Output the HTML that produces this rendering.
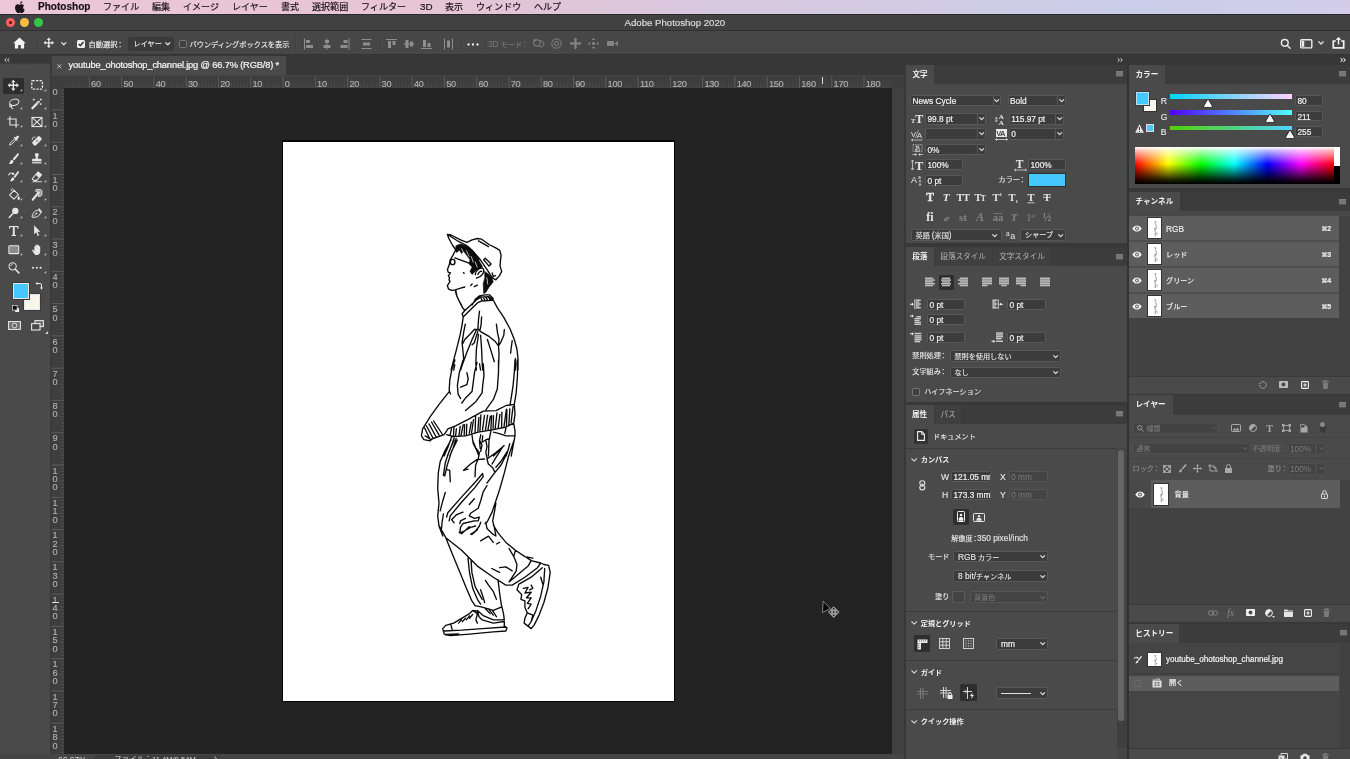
<!DOCTYPE html>
<html lang="ja">
<head>
<meta charset="utf-8">
<title>Adobe Photoshop 2020</title>
<style>
*{box-sizing:border-box;margin:0;padding:0}
html,body{width:1350px;height:759px;overflow:hidden;background:#454545}
body{position:relative;font-family:"Liberation Sans","Noto Sans CJK JP",sans-serif;font-size:8px;color:#dcdcdc;line-height:1;-webkit-font-smoothing:antialiased}
.a{position:absolute}
.t{position:absolute;white-space:nowrap;line-height:1}
svg{position:absolute;overflow:visible}
/* menu bar */
#menubar{left:0;top:0;width:1350px;height:14px;background:linear-gradient(90deg,#ecc7d6 0%,#e8c5d4 29.600%,#e0c5d8 41.500%,#d8c8df 51.900%,#d2cbe3 66.700%,#c9cde9 83.700%,#d3cdea 100%)}
#menubar .t{top:1.5px;font-size:9.05px;color:#1a1216;line-height:11px;-webkit-text-stroke-width:0.18px}
#titlebar{left:0;top:14px;width:1350px;height:17px;background:#414141;border-top:1px solid #2a2a2a;border-bottom:1px solid #303030}
#optbar{left:0;top:31px;width:1350px;height:24px;background:#474747;border-bottom:1px solid #333}
.sep{position:absolute;width:1px;background:#404040;top:35px;height:17px;box-shadow:1px 0 0 #4c4c4c}
.fld{position:absolute;background:#3b3b3b;border:1px solid #5a5a5a;border-radius:1.5px}
.fld .t{color:#e6e6e6}
/* panels */
.pbar{position:absolute;background:#3c3c3c}
.ptab{position:absolute;background:#4a4a4a;top:0;height:100%}
.ptab.in{background:#404040}
.pbody{position:absolute;background:#4a4a4a}
.pt{position:absolute;white-space:nowrap;font-size:7.6px;line-height:10px;color:#f0f0f0;font-weight:bold}
.pt.dim{color:#b4b4b4;font-weight:normal}
.lab{position:absolute;white-space:nowrap;font-size:7.15px;line-height:10px;color:#e2e2e2;-webkit-text-stroke-width:0.15px}
.val{position:absolute;white-space:nowrap;font-size:8.3px;line-height:10px;color:#f0f0f0;-webkit-text-stroke-width:0.2px}
.dimt{color:#7c7c7c !important;-webkit-text-stroke-width:0 !important}
.hd{position:absolute;white-space:nowrap;font-size:7.15px;line-height:10px;color:#f2f2f2;font-weight:bold}
.row{position:absolute;background:#5d5d5d}
.hsep{position:absolute;height:1px;background:#3c3c3c}
.rl{font-size:9.2px;color:#b0b0b0;line-height:9px;letter-spacing:-0.3px;-webkit-text-stroke:0.15px #b0b0b0}
.en{font-size:8.3px}
.co{display:inline-block;width:4.4px;text-indent:-1.1px;overflow:visible}
</style>
</head>
<body>
<div id="app" style="position:absolute;left:0;top:0;width:1350px;height:759px;will-change:transform;transform:translateZ(0)">
<!-- macOS menu bar -->
<div id="menubar" class="a">
<svg style="left:14.5px;top:0.5px" width="10" height="12" viewBox="0 0 170 200"><path fill="#1c1418" d="M150 68c-1 1-22 13-22 39 0 30 27 41 28 41-0.200 0.600-4 15-14 30-9 13-18 26-32 26s-18-8-34-8c-16 0-21 8-34 8s-22-12-33-26C-2 160-10 126-10 110c0-37 24-57 48-57 13 0 23 8 31 8 8 0 20-9 34-9 6 0 26 0.500 39 16zM105 33c6-7 10-17 10-27 0-1 0-3-0.300-4-10 0.400-21 6-28 14-5 6-11 16-11 26 0 2 0.300 3 0.400 4 0.600 0.100 2 0.200 3 0.200 9 0 20-6 26-13z" transform="translate(10,0)"/></svg>
<span class="t" style="left:38px;font-weight:bold;font-size:10.05px;top:1px">Photoshop</span>
<span class="t" style="left:103px">ファイル</span>
<span class="t" style="left:152px">編集</span>
<span class="t" style="left:183px">イメージ</span>
<span class="t" style="left:232px">レイヤー</span>
<span class="t" style="left:281px">書式</span>
<span class="t" style="left:312px">選択範囲</span>
<span class="t" style="left:361px">フィルター</span>
<span class="t" style="left:420px;font-size:9.800px;top:1.200px">3D</span>
<span class="t" style="left:445px">表示</span>
<span class="t" style="left:476px">ウィンドウ</span>
<span class="t" style="left:534px">ヘルプ</span>
</div>
<!-- window title bar -->
<div id="titlebar" class="a">
<div class="a" style="left:5.800px;top:3.400px;width:9px;height:9px;border-radius:50%;background:#fc615d"></div>
<div class="a" style="left:8.800px;top:6.400px;width:3px;height:3px;border-radius:50%;background:#5a0e0c"></div>
<div class="a" style="left:20px;top:3.400px;width:9px;height:9px;border-radius:50%;background:#fdbc40"></div>
<div class="a" style="left:34px;top:3.400px;width:9px;height:9px;border-radius:50%;background:#34c84a"></div>
<span class="t" style="left:624.500px;top:3.500px;font-size:9.650px;color:#dadada;letter-spacing:0px;top:3px;-webkit-text-stroke:0.2px #dadada" id="wtitle">Adobe Photoshop 2020</span>
</div>
<!-- options bar -->
<div id="optbar" class="a"></div>
<svg style="left:13px;top:37px" width="13" height="12" viewBox="0 0 13 12"><path fill="#f4f4f4" d="M6.500 0.400L0.300 6.200h1.600v5.400h3.300V7.900h2.600v3.700h3.300V6.200h1.600z"/></svg>
<div class="sep" style="left:37px"></div>
<svg style="left:43px;top:37.400px" width="11.600" height="11.600" viewBox="0 0 16 16"><path fill="#ededed" d="M8 0.800L10.800 4H8.900V7.100H12V5.200L15.200 8 12 10.800V8.900H8.900V12H10.800L8 15.200 5.200 12H7.100V8.900H4V10.800L0.800 8 4 5.200V7.100H7.100V4H5.200Z"/></svg>
<svg style="left:60.500px;top:42px" width="5.600" height="3.700" viewBox="0 0 6 4"><path fill="none" stroke="#e0e0e0" stroke-width="1.300" stroke-linecap="round" stroke-linejoin="round" d="M0.800 0.800L3 3l2.200-2.200"/></svg>
<div class="sep" style="left:72px"></div>
<div class="a" style="left:77px;top:40px;width:8px;height:8px;background:#f0f0f0;border-radius:1.500px"></div>
<svg style="left:77px;top:40px" width="8" height="8" viewBox="0 0 8 8"><path fill="none" stroke="#2c2c2c" stroke-width="1.400" d="M1.600 4.100l1.700 1.700L6.500 2"/></svg>
<span class="t" style="left:88.500px;top:39.500px;font-size:7.250px;color:#e6e6e6;line-height:9px;-webkit-text-stroke:0.2px #e6e6e6">自動選択<span class="co">：</span></span>
<div class="a" style="left:128px;top:37px;width:46px;height:14px;background:#3a3a3a;border-radius:2px"></div>
<span class="t" style="left:133.600px;top:39.800px;font-size:7.100px;color:#e6e6e6;line-height:9px;-webkit-text-stroke:0.2px #e6e6e6">レイヤー</span>
<svg style="left:164.800px;top:42.300px" width="5.600" height="3.700" viewBox="0 0 6 4"><path fill="none" stroke="#e0e0e0" stroke-width="1.300" stroke-linecap="round" stroke-linejoin="round" d="M0.800 0.800L3 3l2.200-2.200"/></svg>
<div class="a" style="left:179px;top:40px;width:8px;height:8px;background:#404040;border:1px solid #777;border-radius:1.500px"></div>
<span class="t" style="left:189.500px;top:39.500px;font-size:7.200px;color:#e2e2e2;line-height:9px;-webkit-text-stroke:0.2px #e2e2e2">バウンディングボックスを表示</span>
<div class="sep" style="left:295px"></div>
<!-- align icons (dim) -->
<svg style="left:303px;top:38px" width="320" height="12" viewBox="0 0 320 12" fill="#8e8e8e">
<g><rect x="1" y="0.500" width="1" height="11"/><rect x="3" y="2" width="4" height="3"/><rect x="3" y="7" width="7" height="3"/></g>
<g transform="translate(18.500,0)"><rect x="5" y="0.500" width="1" height="11"/><rect x="3.500" y="2" width="4" height="3"/><rect x="2" y="7" width="7" height="3"/></g>
<g transform="translate(36.500,0)"><rect x="9" y="0.500" width="1" height="11"/><rect x="4" y="2" width="4" height="3"/><rect x="1" y="7" width="7" height="3"/></g>
<g transform="translate(58,0)"><rect x="0.500" y="1" width="10" height="1"/><rect x="0.500" y="10" width="10" height="1"/><rect x="2" y="4.500" width="7" height="3"/></g>
<g transform="translate(83,0)"><rect x="0" y="1" width="11" height="1"/><rect x="2" y="3" width="3" height="7"/><rect x="6.500" y="3" width="3" height="4"/></g>
<g transform="translate(100.500,0)"><rect x="0" y="5.500" width="11" height="1"/><rect x="2" y="2" width="3" height="8"/><rect x="6.500" y="3.500" width="3" height="5"/></g>
<g transform="translate(118,0)"><rect x="0" y="10" width="11" height="1"/><rect x="2" y="2" width="3" height="7"/><rect x="6.500" y="5" width="3" height="4"/></g>
<g transform="translate(140,0)"><rect x="1" y="0.500" width="1" height="11"/><rect x="9" y="0.500" width="1" height="11"/><rect x="4" y="2.500" width="3" height="7"/></g>
</svg>
<div class="sep" style="left:379.500px"></div>
<div class="sep" style="left:460.500px"></div><div class="sep" style="left:484.500px"></div>
<svg style="left:466.500px;top:42.500px" width="12" height="3" viewBox="0 0 12 3" fill="#efefef"><circle cx="1.500" cy="1.500" r="1.150"/><circle cx="6" cy="1.500" r="1.150"/><circle cx="10.500" cy="1.500" r="1.150"/></svg>
<span class="t" style="left:488px;top:39.500px;font-size:7.200px;color:#7c7c7c;line-height:9px"><span style="font-size:8.300px">3D</span> モード<span class="co">：</span></span>
<svg style="left:532px;top:37px" width="90" height="13" viewBox="0 0 90 13" fill="none" stroke="#858585" stroke-width="1">
<g><circle cx="5" cy="6" r="3.300"/><path d="M7.500 9.500a3 3 0 1 0 0.500-5.500"/><path d="M1 4l1.500-2 1.500 2" stroke-width="0.800"/></g>
<g transform="translate(18.500,0)"><circle cx="6" cy="6.500" r="4.700"/><circle cx="6" cy="6.500" r="2"/></g>
<g transform="translate(37,0)" fill="#858585" stroke="none"><path d="M6.500 0.500l2 2.200h-4zM6.500 12.500l-2-2.200h4zM0.500 6.500l2.200-2v4zM12.500 6.500l-2.200 2v-4z"/><rect x="5.500" y="2.500" width="2" height="8"/><rect x="2.500" y="5.500" width="8" height="2"/></g>
<g transform="translate(55,0)" fill="#858585" stroke="none"><path d="M6.500 1l1.800 2h-3.600zM6.500 12l-1.800-2h3.600zM1 6.500l2-1.800v3.600zM12 6.500l-2 1.800v-3.600z"/><circle cx="6.500" cy="6.500" r="1.600"/></g>
<g transform="translate(74,0)" fill="#858585" stroke="none"><rect x="1" y="4" width="7" height="5" rx="0.800"/><path d="M8.500 6.500l3.500-2.500v5z"/></g>
</svg>
<!-- right side of options bar -->
<svg style="left:1280px;top:37.600px" width="11" height="11" viewBox="0 0 12 12" fill="none" stroke="#ececec" stroke-width="1.500"><circle cx="5.200" cy="5.300" r="3.700"/><path d="M8 8.200L11 11.200" stroke-linecap="round"/></svg>
<svg style="left:1300px;top:38.700px" width="12.500" height="9.600" viewBox="0 0 12.500 9.600"><rect x="0.700" y="0.700" width="11.100" height="8.200" rx="1" fill="none" stroke="#ececec" stroke-width="1.400"/><rect x="1.800" y="1.800" width="2.200" height="6" fill="#ececec"/><path d="M4.800 1.500v6.600" stroke="#9a9a9a" stroke-width="0.600"/></svg>
<svg style="left:1318.400px;top:41.300px" width="6" height="4" viewBox="0 0 6 4"><path fill="none" stroke="#e0e0e0" stroke-width="1.300" stroke-linecap="round" stroke-linejoin="round" d="M0.800 0.800L3 3l2.200-2.200"/></svg>
<svg style="left:1331.500px;top:36.500px" width="13" height="12" viewBox="0 0 13 12" fill="none" stroke="#f2f2f2"><path d="M3.800 4H1.300v6.800h10.400V4H9.200" stroke-width="1.700"/><path d="M6.500 7.500V1.200" stroke-width="1.500"/><path d="M4.500 2.800L6.500 0.800 8.500 2.800" stroke-width="1.300" fill="#f2f2f2"/></svg>
<!-- toolbar -->
<div class="a" style="left:0;top:55px;width:51px;height:699px;background:#4a4a4a"></div>
<div class="a" style="left:0;top:55px;width:51px;height:8px;background:#383838"></div>
<div class="a" style="left:0;top:63px;width:51px;height:1px;background:#404040"></div>
<div class="a" style="left:16px;top:66.5px;width:17px;height:1px;background:#525252"></div>
<svg style="left:3.800px;top:57.800px" width="6" height="4" viewBox="0 0 6 4" fill="none" stroke="#dadada" stroke-width="1"><path d="M2.500 0.300L0.700 2l1.800 1.700M5.300 0.300L3.500 2l1.800 1.700"/></svg>
<div class="a" style="left:3px;top:77.500px;width:21px;height:16px;background:#2d2d2d;border-radius:1.5px"></div>
<svg style="left:7.1px;top:78.9px" width="12.6" height="12.6" viewBox="0 0 16 16"><path fill="#e6e6e6" d="M8 0.800L10.800 4H8.900V7.100H12V5.200L15.200 8 12 10.800V8.900H8.900V12H10.800L8 15.200 5.200 12H7.100V8.900H4V10.800L0.800 8 4 5.200V7.100H7.100V4H5.200Z"/></svg>
<svg style="left:19.8px;top:88.6px" width="2.200" height="2.200" viewBox="0 0 3 3"><path d="M3 0v3H0z" fill="#c8c8c8"/></svg>
<svg style="left:30.1px;top:78.1px" width="14.2" height="14.2" viewBox="0 0 16 16"><rect x="2" y="3" width="12" height="9.500" rx="0.800" fill="none" stroke="#e6e6e6" stroke-width="1.500" stroke-dasharray="2.600 1.400"/></svg>
<svg style="left:43.6px;top:88.6px" width="2.200" height="2.200" viewBox="0 0 3 3"><path d="M3 0v3H0z" fill="#c8c8c8"/></svg>
<svg style="left:6.6px;top:96.6px" width="13.6" height="13.6" viewBox="0 0 16 16"><g fill="none" stroke="#e6e6e6" stroke-width="1.200"><ellipse cx="8.600" cy="6.300" rx="5.600" ry="3.700" transform="rotate(-18 8.600 6.300)"/><circle cx="4.400" cy="10.200" r="1.300"/><path d="M4.600 11.500c0.300 1.500 1.200 2.400 2.800 2.600"/></g></svg>
<svg style="left:19.8px;top:106.8px" width="2.200" height="2.200" viewBox="0 0 3 3"><path d="M3 0v3H0z" fill="#c8c8c8"/></svg>
<svg style="left:30.4px;top:96.6px" width="13.6" height="13.6" viewBox="0 0 16 16"><g stroke="#e6e6e6" fill="none"><path d="M2.800 13.200l7.400-7.400" stroke-width="2.700" stroke-linecap="round"/><path d="M8.600 8.400l2-2" stroke="#4a4a4a" stroke-width="0.900"/><path d="M4.500 1.800v2.400M3.300 3h2.400M12.800 1.800v2.400M11.600 3h2.400M12.600 7.300v2.200M11.500 8.400h2.200" stroke-width="1"/></g></svg>
<svg style="left:43.6px;top:106.8px" width="2.200" height="2.200" viewBox="0 0 3 3"><path d="M3 0v3H0z" fill="#c8c8c8"/></svg>
<svg style="left:6.4px;top:115.0px" width="14" height="14" viewBox="0 0 16 16"><g fill="none" stroke="#e6e6e6" stroke-width="1.250"><path d="M4.500 1.500v10h10"/><path d="M1.500 4.500h10v10"/></g></svg>
<svg style="left:19.8px;top:125.4px" width="2.200" height="2.200" viewBox="0 0 3 3"><path d="M3 0v3H0z" fill="#c8c8c8"/></svg>
<svg style="left:30.2px;top:115.0px" width="14" height="14" viewBox="0 0 16 16"><g fill="none" stroke="#e6e6e6" stroke-width="1.200"><rect x="2.300" y="2.800" width="11.400" height="10.400"/><path d="M2.300 2.800l11.400 10.400M13.700 2.800L2.300 13.200"/></g></svg>
<svg style="left:43.6px;top:125.4px" width="2.200" height="2.200" viewBox="0 0 3 3"><path d="M3 0v3H0z" fill="#c8c8c8"/></svg>
<svg style="left:6.6px;top:133.6px" width="13.6" height="13.6" viewBox="0 0 16 16"><g stroke="#e6e6e6" fill="none"><path d="M3 13l0.800-2.300 5-5 1.500 1.500-5 5z" stroke-width="1.100"/><path d="M9 4.200l2.800 2.800" stroke-width="1.600" stroke-linecap="round"/><path d="M10.700 5.300l2-2" stroke-width="2.800" stroke-linecap="round"/></g></svg>
<svg style="left:19.8px;top:143.8px" width="2.200" height="2.200" viewBox="0 0 3 3"><path d="M3 0v3H0z" fill="#c8c8c8"/></svg>
<svg style="left:30.4px;top:133.6px" width="13.6" height="13.6" viewBox="0 0 16 16"><g><rect x="2.200" y="5.300" width="12" height="5.600" rx="1.600" transform="rotate(-45 8.200 8.100)" fill="#e6e6e6"/><g fill="#4a4a4a"><circle cx="7.200" cy="8.100" r="0.550"/><circle cx="8.200" cy="7.100" r="0.550"/><circle cx="9.200" cy="8.100" r="0.550"/><circle cx="8.200" cy="9.100" r="0.550"/><circle cx="8.200" cy="8.100" r="0.450"/></g><path d="M2.300 7.500a4 4 0 0 1 4-4.200" fill="none" stroke="#e6e6e6" stroke-width="0.900"/></g></svg>
<svg style="left:43.6px;top:143.8px" width="2.200" height="2.200" viewBox="0 0 3 3"><path d="M3 0v3H0z" fill="#c8c8c8"/></svg>
<svg style="left:6.6px;top:151.8px" width="13.6" height="13.6" viewBox="0 0 16 16"><g fill="#e6e6e6"><path d="M13.600 1.800c0.600 0.500 0.500 1.100 0.100 1.700L8.500 10 6.600 8.300l5.500-6.200c0.400-0.500 1-0.700 1.500-0.300z"/><path d="M5.900 9.100l1.900 1.700c-0.300 1.800-1.500 2.900-3 3.200-1.100 0.200-2.100 0-2.800-0.300 1.300-0.600 1.500-1.300 1.700-2.300 0.200-1.100 1-2.100 2.200-2.300z"/></g></svg>
<svg style="left:19.8px;top:162.0px" width="2.200" height="2.200" viewBox="0 0 3 3"><path d="M3 0v3H0z" fill="#c8c8c8"/></svg>
<svg style="left:30.4px;top:151.8px" width="13.6" height="13.6" viewBox="0 0 16 16"><g fill="#e6e6e6"><circle cx="8" cy="3.600" r="2.300"/><path d="M7 5h2l0.400 3h3.300c0.500 0 0.800 0.300 0.800 0.800v2H2.500v-2c0-0.500 0.300-0.800 0.800-0.800h3.300z"/><rect x="2.500" y="11.600" width="11" height="2" opacity="0.800"/></g></svg>
<svg style="left:43.6px;top:162.0px" width="2.200" height="2.200" viewBox="0 0 3 3"><path d="M3 0v3H0z" fill="#c8c8c8"/></svg>
<svg style="left:6.6px;top:169.8px" width="13.6" height="13.6" viewBox="0 0 16 16"><g fill="#e6e6e6"><path d="M13.800 1.600c0.500 0.500 0.500 1 0.100 1.600L9.400 9.300 7.700 7.800l4.700-6c0.400-0.500 0.900-0.600 1.400-0.200z"/><path d="M7 8.600l1.700 1.500c-0.300 1.700-1.300 2.700-2.700 3-1 0.200-1.900 0.100-2.600-0.200 1.200-0.600 1.400-1.200 1.600-2.200 0.200-1 0.900-1.900 2-2.100z"/><path d="M1.200 6.200a4 4 0 0 1 6.200-2.600l0.800-1 0.500 3.200-3.200-0.200 0.900-1a2.600 2.600 0 0 0-3.900 1.900z"/></g></svg>
<svg style="left:19.8px;top:180.0px" width="2.200" height="2.200" viewBox="0 0 3 3"><path d="M3 0v3H0z" fill="#c8c8c8"/></svg>
<svg style="left:30.4px;top:169.8px" width="13.6" height="13.6" viewBox="0 0 16 16"><g><path d="M9.600 2.300l4 3.400-5.800 6.500H4.600L2.500 10.300z" fill="none" stroke="#e6e6e6" stroke-width="1.200" stroke-linejoin="round"/><path d="M9.600 2.300l4 3.400-3 3.400-4-3.400z" fill="#e6e6e6"/><path d="M3 13.800h11" stroke="#e6e6e6" stroke-width="1.100"/></g></svg>
<svg style="left:43.6px;top:180.0px" width="2.200" height="2.200" viewBox="0 0 3 3"><path d="M3 0v3H0z" fill="#c8c8c8"/></svg>
<svg style="left:6.6px;top:187.6px" width="13.6" height="13.6" viewBox="0 0 16 16"><g><path d="M3 8.200l5.500-5.500 5 5-5.500 5.500z" fill="none" stroke="#e6e6e6" stroke-width="1.200" stroke-linejoin="round"/><path d="M5.500 3.500c-1.500-2.500 1-3.500 2.200-1.200l1.300 2.500" fill="none" stroke="#e6e6e6" stroke-width="1"/><path d="M13.800 9.500c0.900 1.300 1.500 2.200 1.500 3a1.500 1.500 0 0 1-3 0c0-0.800 0.600-1.700 1.500-3z" fill="#e6e6e6"/></g></svg>
<svg style="left:19.8px;top:197.8px" width="2.200" height="2.200" viewBox="0 0 3 3"><path d="M3 0v3H0z" fill="#c8c8c8"/></svg>
<svg style="left:30.4px;top:187.6px" width="13.6" height="13.6" viewBox="0 0 16 16"><g><path d="M6.200 3.200c0.300-1 1-1.500 2-1.500h3.600c1.400 0 2.300 0.900 2.300 2.300v3.300c0 1.300-0.700 2.200-2 2.400l-2.600 0.300 1.200-3.800z" fill="#9a9a9a" stroke="#e6e6e6" stroke-width="1"/><path d="M10.200 5.200L3.300 13.600" stroke="#e6e6e6" stroke-width="2.500" stroke-linecap="round"/></g></svg>
<svg style="left:43.6px;top:197.8px" width="2.200" height="2.200" viewBox="0 0 3 3"><path d="M3 0v3H0z" fill="#c8c8c8"/></svg>
<svg style="left:6.6px;top:206.0px" width="13.6" height="13.6" viewBox="0 0 16 16"><g><circle cx="9.800" cy="5.800" r="3.700" fill="#e6e6e6"/><path d="M7.300 8.500L2.600 13.500" stroke="#e6e6e6" stroke-width="1.700" stroke-linecap="round"/></g></svg>
<svg style="left:19.8px;top:216.2px" width="2.200" height="2.200" viewBox="0 0 3 3"><path d="M3 0v3H0z" fill="#c8c8c8"/></svg>
<svg style="left:30.4px;top:206.0px" width="13.6" height="13.6" viewBox="0 0 16 16"><g><path d="M3 13.200c0.300-3.200 1.300-5.600 3.500-7.500l3.200-1.200 2.800 2.800-1.200 3.200c-1.900 2.200-4.300 3.200-7.500 3.500z" fill="none" stroke="#e6e6e6" stroke-width="1.100" stroke-linejoin="round" transform="rotate(8 8 8)"/><path d="M10 3.200l3.200 3.200" stroke="#e6e6e6" stroke-width="1.700" stroke-linecap="round" transform="rotate(8 8 8)"/><circle cx="7.600" cy="8.700" r="1" fill="#e6e6e6"/><path d="M3.200 13l3.800-3.800" stroke="#e6e6e6" stroke-width="0.800"/></g></svg>
<svg style="left:43.6px;top:216.2px" width="2.200" height="2.200" viewBox="0 0 3 3"><path d="M3 0v3H0z" fill="#c8c8c8"/></svg>
<svg style="left:6.6px;top:224.2px" width="13.6" height="13.6" viewBox="0 0 16 16"><path fill="#e6e6e6" d="M2.500 2.300h11v3.200h-1c-0.200-1.300-0.600-1.900-1.700-1.900H9.100v8.600c0 0.800 0.400 1 1.500 1.100v0.900H5.400v-0.900c1.100-0.100 1.500-0.300 1.500-1.100V3.600H5.200c-1.100 0-1.500 0.600-1.700 1.900h-1z"/></svg>
<svg style="left:19.8px;top:234.4px" width="2.200" height="2.200" viewBox="0 0 3 3"><path d="M3 0v3H0z" fill="#c8c8c8"/></svg>
<svg style="left:30.4px;top:224.2px" width="13.6" height="13.6" viewBox="0 0 16 16"><path fill="#e6e6e6" d="M4.800 1.500l7.400 7.600H8.900l1.900 4.300-1.600 0.700-1.900-4.400-2.500 2.300z"/></svg>
<svg style="left:43.6px;top:234.4px" width="2.200" height="2.200" viewBox="0 0 3 3"><path d="M3 0v3H0z" fill="#c8c8c8"/></svg>
<svg style="left:6.6px;top:242.5px" width="13.6" height="13.6" viewBox="0 0 16 16"><g><rect x="2.200" y="3.300" width="11.600" height="9.200" rx="0.800" fill="#8a8a8a" stroke="#e6e6e6" stroke-width="1.200"/></g></svg>
<svg style="left:19.8px;top:252.7px" width="2.200" height="2.200" viewBox="0 0 3 3"><path d="M3 0v3H0z" fill="#c8c8c8"/></svg>
<svg style="left:30.4px;top:242.5px" width="13.6" height="13.6" viewBox="0 0 16 16"><path fill="#e6e6e6" d="M6.200 7.800V3.300c0-1.100 1.400-1.100 1.400 0V2.400c0-1.100 1.500-1.100 1.500 0v0.900c0-1.100 1.500-1.100 1.500 0v1.100c0-1 1.400-1 1.400 0v5.100c0 2.800-1.500 4.700-3.900 4.700-2 0-2.900-0.900-4-2.700L2.700 9.100c-0.600-1 0.500-1.700 1.300-0.900l1.100 1.100V4.600c0-1 1.100-1 1.100 0z"/></svg>
<svg style="left:43.6px;top:252.7px" width="2.200" height="2.200" viewBox="0 0 3 3"><path d="M3 0v3H0z" fill="#c8c8c8"/></svg>
<svg style="left:6.6px;top:260.7px" width="13.6" height="13.6" viewBox="0 0 16 16"><g fill="none" stroke="#e6e6e6"><circle cx="6.600" cy="6.300" r="4.300" stroke-width="1.200"/><path d="M9.800 9.600l4.200 4.400" stroke-width="1.800" stroke-linecap="round"/><path d="M4.200 6a2.600 2.600 0 0 1 2.400-2.200" stroke-width="0.800"/></g></svg>
<svg style="left:30.4px;top:260.7px" width="13.6" height="13.6" viewBox="0 0 16 16"><g fill="#e6e6e6"><circle cx="3.500" cy="8" r="1.250"/><circle cx="8" cy="8" r="1.250"/><circle cx="12.500" cy="8" r="1.250"/></g></svg>
<svg style="left:43.6px;top:270.9px" width="2.200" height="2.200" viewBox="0 0 3 3"><path d="M3 0v3H0z" fill="#c8c8c8"/></svg>
<div class="a" style="left:22.5px;top:292.500px;width:18px;height:18px;background:#f8f5ea;border:1px solid #3a3a3a;outline:1px solid #e6e6e6;outline-offset:-2px"></div>
<div class="a" style="left:12px;top:281.500px;width:18px;height:18px;background:#45c8ff;border:1px solid #3a3a3a;outline:1px solid #e6e6e6;outline-offset:-2px"></div>
<svg style="left:34.500px;top:281.500px" width="8" height="8" viewBox="0 0 8 8"><path d="M2 1.500h3a1.500 1.500 0 0 1 1.500 1.500v3" fill="none" stroke="#e6e6e6" stroke-width="1"/><path d="M2.600 0L0.300 1.500l2.300 1.500zM5 5.400l1.500 2.300L8 5.400z" fill="#e6e6e6"/></svg>
<svg style="left:12px;top:305px" width="8" height="8" viewBox="0 0 8 8"><rect x="2.800" y="2.800" width="4.600" height="4.600" fill="#f0f0f0" stroke="#222" stroke-width="0.600"/><rect x="0.500" y="0.500" width="4.600" height="4.600" fill="#111" stroke="#e0e0e0" stroke-width="0.700"/></svg>
<svg style="left:7.500px;top:320.500px" width="13" height="9" viewBox="0 0 13 9"><rect x="0.600" y="0.600" width="11.800" height="7.800" fill="#6a6a6a" stroke="#e6e6e6" stroke-width="1.100"/><circle cx="6.500" cy="4.500" r="2.400" fill="none" stroke="#e6e6e6" stroke-width="0.900"/></svg>
<svg style="left:30.500px;top:319.500px" width="13" height="11" viewBox="0 0 13 11"><rect x="4" y="0.600" width="8.400" height="6" fill="#6a6a6a" stroke="#e6e6e6" stroke-width="1.100"/><rect x="0.600" y="3.600" width="8.400" height="6.400" fill="#4a4a4a" stroke="#e6e6e6" stroke-width="1.100"/></svg>
<svg style="left:45.200px;top:330.500px" width="3" height="3" viewBox="0 0 3 3"><path d="M3 0v3H0z" fill="#d0d0d0"/></svg>
<!-- document tab strip -->
<div class="a" style="left:51px;top:55px;width:1299px;height:20px;background:#373737"></div>
<div class="a" style="left:52px;top:56px;width:233.500px;height:19.500px;background:#4a4a4a"></div>
<svg style="left:57.200px;top:64px" width="4.600" height="4.600" viewBox="0 0 5 5"><path d="M0.400 0.400l4.200 4.200M4.600 0.400L0.400 4.600" stroke="#cfcfcf" stroke-width="1" fill="none"/></svg>
<span class="t" style="left:68.500px;top:59.500px;font-size:9.300px;line-height:11px;color:#f4f4f4;letter-spacing:-0.165px;-webkit-text-stroke:0.22px #f4f4f4" id="tabtitle">youtube_ohotoshop_channel.jpg @ 66.7% (RGB/8) *</span>
<!-- rulers -->
<div class="a" style="left:51px;top:75.500px;width:853px;height:12.500px;background:#3e3e3e"></div>
<div class="a" style="left:51px;top:88px;width:13px;height:666px;background:#3e3e3e"></div>
<div class="a" style="left:50px;top:55px;width:1.500px;height:699px;background:#3a3a3a"></div>
<div class="a" style="left:51px;top:75px;width:853px;height:1px;background:#444"></div>
<svg style="left:0;top:75.500px" width="904" height="13" viewBox="0 0 904 13"><g stroke="#5c5c5c" stroke-width="1"><path d="M66.7 7.5V13" stroke="#4b4b4b"/><path d="M70.0 7.5V13" stroke="#4b4b4b"/><path d="M73.2 6V13" stroke="#4b4b4b"/><path d="M76.4 7.5V13" stroke="#4b4b4b"/><path d="M79.6 7.5V13" stroke="#4b4b4b"/><path d="M82.9 7.5V13" stroke="#4b4b4b"/><path d="M86.1 7.5V13" stroke="#4b4b4b"/><path d="M89.3 0.500V13"/><path d="M92.5 7.5V13" stroke="#4b4b4b"/><path d="M95.8 7.5V13" stroke="#4b4b4b"/><path d="M99.0 7.5V13" stroke="#4b4b4b"/><path d="M102.2 7.5V13" stroke="#4b4b4b"/><path d="M105.5 6V13" stroke="#4b4b4b"/><path d="M108.7 7.5V13" stroke="#4b4b4b"/><path d="M111.9 7.5V13" stroke="#4b4b4b"/><path d="M115.1 7.5V13" stroke="#4b4b4b"/><path d="M118.4 7.5V13" stroke="#4b4b4b"/><path d="M121.6 0.500V13"/><path d="M124.8 7.5V13" stroke="#4b4b4b"/><path d="M128.1 7.5V13" stroke="#4b4b4b"/><path d="M131.3 7.5V13" stroke="#4b4b4b"/><path d="M134.5 7.5V13" stroke="#4b4b4b"/><path d="M137.7 6V13" stroke="#4b4b4b"/><path d="M141.0 7.5V13" stroke="#4b4b4b"/><path d="M144.2 7.5V13" stroke="#4b4b4b"/><path d="M147.4 7.5V13" stroke="#4b4b4b"/><path d="M150.7 7.5V13" stroke="#4b4b4b"/><path d="M153.9 0.500V13"/><path d="M157.1 7.5V13" stroke="#4b4b4b"/><path d="M160.3 7.5V13" stroke="#4b4b4b"/><path d="M163.6 7.5V13" stroke="#4b4b4b"/><path d="M166.8 7.5V13" stroke="#4b4b4b"/><path d="M170.0 6V13" stroke="#4b4b4b"/><path d="M173.2 7.5V13" stroke="#4b4b4b"/><path d="M176.5 7.5V13" stroke="#4b4b4b"/><path d="M179.7 7.5V13" stroke="#4b4b4b"/><path d="M182.9 7.5V13" stroke="#4b4b4b"/><path d="M186.2 0.500V13"/><path d="M189.4 7.5V13" stroke="#4b4b4b"/><path d="M192.6 7.5V13" stroke="#4b4b4b"/><path d="M195.8 7.5V13" stroke="#4b4b4b"/><path d="M199.1 7.5V13" stroke="#4b4b4b"/><path d="M202.3 6V13" stroke="#4b4b4b"/><path d="M205.5 7.5V13" stroke="#4b4b4b"/><path d="M208.8 7.5V13" stroke="#4b4b4b"/><path d="M212.0 7.5V13" stroke="#4b4b4b"/><path d="M215.2 7.5V13" stroke="#4b4b4b"/><path d="M218.4 0.500V13"/><path d="M221.7 7.5V13" stroke="#4b4b4b"/><path d="M224.9 7.5V13" stroke="#4b4b4b"/><path d="M228.1 7.5V13" stroke="#4b4b4b"/><path d="M231.4 7.5V13" stroke="#4b4b4b"/><path d="M234.6 6V13" stroke="#4b4b4b"/><path d="M237.8 7.5V13" stroke="#4b4b4b"/><path d="M241.0 7.5V13" stroke="#4b4b4b"/><path d="M244.3 7.5V13" stroke="#4b4b4b"/><path d="M247.5 7.5V13" stroke="#4b4b4b"/><path d="M250.7 0.500V13"/><path d="M253.9 7.5V13" stroke="#4b4b4b"/><path d="M257.2 7.5V13" stroke="#4b4b4b"/><path d="M260.4 7.5V13" stroke="#4b4b4b"/><path d="M263.6 7.5V13" stroke="#4b4b4b"/><path d="M266.9 6V13" stroke="#4b4b4b"/><path d="M270.1 7.5V13" stroke="#4b4b4b"/><path d="M273.3 7.5V13" stroke="#4b4b4b"/><path d="M276.5 7.5V13" stroke="#4b4b4b"/><path d="M279.8 7.5V13" stroke="#4b4b4b"/><path d="M283.0 0.500V13"/><path d="M286.2 7.5V13" stroke="#4b4b4b"/><path d="M289.5 7.5V13" stroke="#4b4b4b"/><path d="M292.7 7.5V13" stroke="#4b4b4b"/><path d="M295.9 7.5V13" stroke="#4b4b4b"/><path d="M299.1 6V13" stroke="#4b4b4b"/><path d="M302.4 7.5V13" stroke="#4b4b4b"/><path d="M305.6 7.5V13" stroke="#4b4b4b"/><path d="M308.8 7.5V13" stroke="#4b4b4b"/><path d="M312.1 7.5V13" stroke="#4b4b4b"/><path d="M315.3 0.500V13"/><path d="M318.5 7.5V13" stroke="#4b4b4b"/><path d="M321.7 7.5V13" stroke="#4b4b4b"/><path d="M325.0 7.5V13" stroke="#4b4b4b"/><path d="M328.2 7.5V13" stroke="#4b4b4b"/><path d="M331.4 6V13" stroke="#4b4b4b"/><path d="M334.6 7.5V13" stroke="#4b4b4b"/><path d="M337.9 7.5V13" stroke="#4b4b4b"/><path d="M341.1 7.5V13" stroke="#4b4b4b"/><path d="M344.3 7.5V13" stroke="#4b4b4b"/><path d="M347.6 0.500V13"/><path d="M350.8 7.5V13" stroke="#4b4b4b"/><path d="M354.0 7.5V13" stroke="#4b4b4b"/><path d="M357.2 7.5V13" stroke="#4b4b4b"/><path d="M360.5 7.5V13" stroke="#4b4b4b"/><path d="M363.7 6V13" stroke="#4b4b4b"/><path d="M366.9 7.5V13" stroke="#4b4b4b"/><path d="M370.2 7.5V13" stroke="#4b4b4b"/><path d="M373.4 7.5V13" stroke="#4b4b4b"/><path d="M376.6 7.5V13" stroke="#4b4b4b"/><path d="M379.8 0.500V13"/><path d="M383.1 7.5V13" stroke="#4b4b4b"/><path d="M386.3 7.5V13" stroke="#4b4b4b"/><path d="M389.5 7.5V13" stroke="#4b4b4b"/><path d="M392.8 7.5V13" stroke="#4b4b4b"/><path d="M396.0 6V13" stroke="#4b4b4b"/><path d="M399.2 7.5V13" stroke="#4b4b4b"/><path d="M402.4 7.5V13" stroke="#4b4b4b"/><path d="M405.7 7.5V13" stroke="#4b4b4b"/><path d="M408.9 7.5V13" stroke="#4b4b4b"/><path d="M412.1 0.500V13"/><path d="M415.3 7.5V13" stroke="#4b4b4b"/><path d="M418.6 7.5V13" stroke="#4b4b4b"/><path d="M421.8 7.5V13" stroke="#4b4b4b"/><path d="M425.0 7.5V13" stroke="#4b4b4b"/><path d="M428.3 6V13" stroke="#4b4b4b"/><path d="M431.5 7.5V13" stroke="#4b4b4b"/><path d="M434.7 7.5V13" stroke="#4b4b4b"/><path d="M437.9 7.5V13" stroke="#4b4b4b"/><path d="M441.2 7.5V13" stroke="#4b4b4b"/><path d="M444.4 0.500V13"/><path d="M447.6 7.5V13" stroke="#4b4b4b"/><path d="M450.9 7.5V13" stroke="#4b4b4b"/><path d="M454.1 7.5V13" stroke="#4b4b4b"/><path d="M457.3 7.5V13" stroke="#4b4b4b"/><path d="M460.5 6V13" stroke="#4b4b4b"/><path d="M463.8 7.5V13" stroke="#4b4b4b"/><path d="M467.0 7.5V13" stroke="#4b4b4b"/><path d="M470.2 7.5V13" stroke="#4b4b4b"/><path d="M473.5 7.5V13" stroke="#4b4b4b"/><path d="M476.7 0.500V13"/><path d="M479.9 7.5V13" stroke="#4b4b4b"/><path d="M483.1 7.5V13" stroke="#4b4b4b"/><path d="M486.4 7.5V13" stroke="#4b4b4b"/><path d="M489.6 7.5V13" stroke="#4b4b4b"/><path d="M492.8 6V13" stroke="#4b4b4b"/><path d="M496.0 7.5V13" stroke="#4b4b4b"/><path d="M499.3 7.5V13" stroke="#4b4b4b"/><path d="M502.5 7.5V13" stroke="#4b4b4b"/><path d="M505.7 7.5V13" stroke="#4b4b4b"/><path d="M509.0 0.500V13"/><path d="M512.2 7.5V13" stroke="#4b4b4b"/><path d="M515.4 7.5V13" stroke="#4b4b4b"/><path d="M518.6 7.5V13" stroke="#4b4b4b"/><path d="M521.9 7.5V13" stroke="#4b4b4b"/><path d="M525.1 6V13" stroke="#4b4b4b"/><path d="M528.3 7.5V13" stroke="#4b4b4b"/><path d="M531.6 7.5V13" stroke="#4b4b4b"/><path d="M534.8 7.5V13" stroke="#4b4b4b"/><path d="M538.0 7.5V13" stroke="#4b4b4b"/><path d="M541.2 0.500V13"/><path d="M544.5 7.5V13" stroke="#4b4b4b"/><path d="M547.7 7.5V13" stroke="#4b4b4b"/><path d="M550.9 7.5V13" stroke="#4b4b4b"/><path d="M554.2 7.5V13" stroke="#4b4b4b"/><path d="M557.4 6V13" stroke="#4b4b4b"/><path d="M560.6 7.5V13" stroke="#4b4b4b"/><path d="M563.8 7.5V13" stroke="#4b4b4b"/><path d="M567.1 7.5V13" stroke="#4b4b4b"/><path d="M570.3 7.5V13" stroke="#4b4b4b"/><path d="M573.5 0.500V13"/><path d="M576.7 7.5V13" stroke="#4b4b4b"/><path d="M580.0 7.5V13" stroke="#4b4b4b"/><path d="M583.2 7.5V13" stroke="#4b4b4b"/><path d="M586.4 7.5V13" stroke="#4b4b4b"/><path d="M589.7 6V13" stroke="#4b4b4b"/><path d="M592.9 7.5V13" stroke="#4b4b4b"/><path d="M596.1 7.5V13" stroke="#4b4b4b"/><path d="M599.3 7.5V13" stroke="#4b4b4b"/><path d="M602.6 7.5V13" stroke="#4b4b4b"/><path d="M605.8 0.500V13"/><path d="M609.0 7.5V13" stroke="#4b4b4b"/><path d="M612.3 7.5V13" stroke="#4b4b4b"/><path d="M615.5 7.5V13" stroke="#4b4b4b"/><path d="M618.7 7.5V13" stroke="#4b4b4b"/><path d="M621.9 6V13" stroke="#4b4b4b"/><path d="M625.2 7.5V13" stroke="#4b4b4b"/><path d="M628.4 7.5V13" stroke="#4b4b4b"/><path d="M631.6 7.5V13" stroke="#4b4b4b"/><path d="M634.9 7.5V13" stroke="#4b4b4b"/><path d="M638.1 0.500V13"/><path d="M641.3 7.5V13" stroke="#4b4b4b"/><path d="M644.5 7.5V13" stroke="#4b4b4b"/><path d="M647.8 7.5V13" stroke="#4b4b4b"/><path d="M651.0 7.5V13" stroke="#4b4b4b"/><path d="M654.2 6V13" stroke="#4b4b4b"/><path d="M657.4 7.5V13" stroke="#4b4b4b"/><path d="M660.7 7.5V13" stroke="#4b4b4b"/><path d="M663.9 7.5V13" stroke="#4b4b4b"/><path d="M667.1 7.5V13" stroke="#4b4b4b"/><path d="M670.4 0.500V13"/><path d="M673.6 7.5V13" stroke="#4b4b4b"/><path d="M676.8 7.5V13" stroke="#4b4b4b"/><path d="M680.0 7.5V13" stroke="#4b4b4b"/><path d="M683.3 7.5V13" stroke="#4b4b4b"/><path d="M686.5 6V13" stroke="#4b4b4b"/><path d="M689.7 7.5V13" stroke="#4b4b4b"/><path d="M693.0 7.5V13" stroke="#4b4b4b"/><path d="M696.2 7.5V13" stroke="#4b4b4b"/><path d="M699.4 7.5V13" stroke="#4b4b4b"/><path d="M702.6 0.500V13"/><path d="M705.9 7.5V13" stroke="#4b4b4b"/><path d="M709.1 7.5V13" stroke="#4b4b4b"/><path d="M712.3 7.5V13" stroke="#4b4b4b"/><path d="M715.6 7.5V13" stroke="#4b4b4b"/><path d="M718.8 6V13" stroke="#4b4b4b"/><path d="M722.0 7.5V13" stroke="#4b4b4b"/><path d="M725.2 7.5V13" stroke="#4b4b4b"/><path d="M728.5 7.5V13" stroke="#4b4b4b"/><path d="M731.7 7.5V13" stroke="#4b4b4b"/><path d="M734.9 0.500V13"/><path d="M738.1 7.5V13" stroke="#4b4b4b"/><path d="M741.4 7.5V13" stroke="#4b4b4b"/><path d="M744.6 7.5V13" stroke="#4b4b4b"/><path d="M747.8 7.5V13" stroke="#4b4b4b"/><path d="M751.1 6V13" stroke="#4b4b4b"/><path d="M754.3 7.5V13" stroke="#4b4b4b"/><path d="M757.5 7.5V13" stroke="#4b4b4b"/><path d="M760.7 7.5V13" stroke="#4b4b4b"/><path d="M764.0 7.5V13" stroke="#4b4b4b"/><path d="M767.2 0.500V13"/><path d="M770.4 7.5V13" stroke="#4b4b4b"/><path d="M773.7 7.5V13" stroke="#4b4b4b"/><path d="M776.9 7.5V13" stroke="#4b4b4b"/><path d="M780.1 7.5V13" stroke="#4b4b4b"/><path d="M783.3 6V13" stroke="#4b4b4b"/><path d="M786.6 7.5V13" stroke="#4b4b4b"/><path d="M789.8 7.5V13" stroke="#4b4b4b"/><path d="M793.0 7.5V13" stroke="#4b4b4b"/><path d="M796.3 7.5V13" stroke="#4b4b4b"/><path d="M799.5 0.500V13"/><path d="M802.7 7.5V13" stroke="#4b4b4b"/><path d="M805.9 7.5V13" stroke="#4b4b4b"/><path d="M809.2 7.5V13" stroke="#4b4b4b"/><path d="M812.4 7.5V13" stroke="#4b4b4b"/><path d="M815.6 6V13" stroke="#4b4b4b"/><path d="M818.8 7.5V13" stroke="#4b4b4b"/><path d="M822.1 7.5V13" stroke="#4b4b4b"/><path d="M825.3 7.5V13" stroke="#4b4b4b"/><path d="M828.5 7.5V13" stroke="#4b4b4b"/><path d="M831.8 0.500V13"/><path d="M835.0 7.5V13" stroke="#4b4b4b"/><path d="M838.2 7.5V13" stroke="#4b4b4b"/><path d="M841.4 7.5V13" stroke="#4b4b4b"/><path d="M844.7 7.5V13" stroke="#4b4b4b"/><path d="M847.9 6V13" stroke="#4b4b4b"/><path d="M851.1 7.5V13" stroke="#4b4b4b"/><path d="M854.4 7.5V13" stroke="#4b4b4b"/><path d="M857.6 7.5V13" stroke="#4b4b4b"/><path d="M860.8 7.5V13" stroke="#4b4b4b"/><path d="M864.0 0.500V13"/><path d="M867.3 7.5V13" stroke="#4b4b4b"/><path d="M870.5 7.5V13" stroke="#4b4b4b"/><path d="M873.7 7.5V13" stroke="#4b4b4b"/><path d="M877.0 7.5V13" stroke="#4b4b4b"/><path d="M880.2 6V13" stroke="#4b4b4b"/><path d="M883.4 7.5V13" stroke="#4b4b4b"/><path d="M886.6 7.5V13" stroke="#4b4b4b"/><path d="M889.9 7.5V13" stroke="#4b4b4b"/></g></svg>
<span class="t rl" style="left:91.1px;top:79.900px">60</span>
<span class="t rl" style="left:123.4px;top:79.900px">50</span>
<span class="t rl" style="left:155.7px;top:79.900px">40</span>
<span class="t rl" style="left:188.0px;top:79.900px">30</span>
<span class="t rl" style="left:220.2px;top:79.900px">20</span>
<span class="t rl" style="left:252.5px;top:79.900px">10</span>
<span class="t rl" style="left:284.8px;top:79.900px">0</span>
<span class="t rl" style="left:317.1px;top:79.900px">10</span>
<span class="t rl" style="left:349.4px;top:79.900px">20</span>
<span class="t rl" style="left:381.6px;top:79.900px">30</span>
<span class="t rl" style="left:413.9px;top:79.900px">40</span>
<span class="t rl" style="left:446.2px;top:79.900px">50</span>
<span class="t rl" style="left:478.5px;top:79.900px">60</span>
<span class="t rl" style="left:510.8px;top:79.900px">70</span>
<span class="t rl" style="left:543.0px;top:79.900px">80</span>
<span class="t rl" style="left:575.3px;top:79.900px">90</span>
<span class="t rl" style="left:607.6px;top:79.900px">100</span>
<span class="t rl" style="left:639.9px;top:79.900px">110</span>
<span class="t rl" style="left:672.2px;top:79.900px">120</span>
<span class="t rl" style="left:704.4px;top:79.900px">130</span>
<span class="t rl" style="left:736.7px;top:79.900px">140</span>
<span class="t rl" style="left:769.0px;top:79.900px">150</span>
<span class="t rl" style="left:801.3px;top:79.900px">160</span>
<span class="t rl" style="left:833.6px;top:79.900px">170</span>
<span class="t rl" style="left:865.8px;top:79.900px">180</span>
<svg style="left:51px;top:88px" width="13" height="666" viewBox="0 0 13 666"><g stroke="#5c5c5c" stroke-width="1"><path d="M10 2.6H13" stroke="#505050"/><path d="M8.5 5.8H13" stroke="#505050"/><path d="M10 9.0H13" stroke="#505050"/><path d="M10 12.2H13" stroke="#505050"/><path d="M10 15.5H13" stroke="#505050"/><path d="M10 18.7H13" stroke="#505050"/><path d="M0.500 21.9H13"/><path d="M10 25.1H13" stroke="#505050"/><path d="M10 28.4H13" stroke="#505050"/><path d="M10 31.6H13" stroke="#505050"/><path d="M10 34.8H13" stroke="#505050"/><path d="M8.5 38.1H13" stroke="#505050"/><path d="M10 41.3H13" stroke="#505050"/><path d="M10 44.5H13" stroke="#505050"/><path d="M10 47.7H13" stroke="#505050"/><path d="M10 51.0H13" stroke="#505050"/><path d="M0.500 54.2H13"/><path d="M10 57.4H13" stroke="#505050"/><path d="M10 60.7H13" stroke="#505050"/><path d="M10 63.9H13" stroke="#505050"/><path d="M10 67.1H13" stroke="#505050"/><path d="M8.5 70.3H13" stroke="#505050"/><path d="M10 73.6H13" stroke="#505050"/><path d="M10 76.8H13" stroke="#505050"/><path d="M10 80.0H13" stroke="#505050"/><path d="M10 83.3H13" stroke="#505050"/><path d="M0.500 86.5H13"/><path d="M10 89.7H13" stroke="#505050"/><path d="M10 92.9H13" stroke="#505050"/><path d="M10 96.2H13" stroke="#505050"/><path d="M10 99.4H13" stroke="#505050"/><path d="M8.5 102.6H13" stroke="#505050"/><path d="M10 105.8H13" stroke="#505050"/><path d="M10 109.1H13" stroke="#505050"/><path d="M10 112.3H13" stroke="#505050"/><path d="M10 115.5H13" stroke="#505050"/><path d="M0.500 118.8H13"/><path d="M10 122.0H13" stroke="#505050"/><path d="M10 125.2H13" stroke="#505050"/><path d="M10 128.4H13" stroke="#505050"/><path d="M10 131.7H13" stroke="#505050"/><path d="M8.5 134.9H13" stroke="#505050"/><path d="M10 138.1H13" stroke="#505050"/><path d="M10 141.4H13" stroke="#505050"/><path d="M10 144.6H13" stroke="#505050"/><path d="M10 147.8H13" stroke="#505050"/><path d="M0.500 151.0H13"/><path d="M10 154.3H13" stroke="#505050"/><path d="M10 157.5H13" stroke="#505050"/><path d="M10 160.7H13" stroke="#505050"/><path d="M10 164.0H13" stroke="#505050"/><path d="M8.5 167.2H13" stroke="#505050"/><path d="M10 170.4H13" stroke="#505050"/><path d="M10 173.6H13" stroke="#505050"/><path d="M10 176.9H13" stroke="#505050"/><path d="M10 180.1H13" stroke="#505050"/><path d="M0.500 183.3H13"/><path d="M10 186.5H13" stroke="#505050"/><path d="M10 189.8H13" stroke="#505050"/><path d="M10 193.0H13" stroke="#505050"/><path d="M10 196.2H13" stroke="#505050"/><path d="M8.5 199.5H13" stroke="#505050"/><path d="M10 202.7H13" stroke="#505050"/><path d="M10 205.9H13" stroke="#505050"/><path d="M10 209.1H13" stroke="#505050"/><path d="M10 212.4H13" stroke="#505050"/><path d="M0.500 215.6H13"/><path d="M10 218.8H13" stroke="#505050"/><path d="M10 222.1H13" stroke="#505050"/><path d="M10 225.3H13" stroke="#505050"/><path d="M10 228.5H13" stroke="#505050"/><path d="M8.5 231.7H13" stroke="#505050"/><path d="M10 235.0H13" stroke="#505050"/><path d="M10 238.2H13" stroke="#505050"/><path d="M10 241.4H13" stroke="#505050"/><path d="M10 244.7H13" stroke="#505050"/><path d="M0.500 247.9H13"/><path d="M10 251.1H13" stroke="#505050"/><path d="M10 254.3H13" stroke="#505050"/><path d="M10 257.6H13" stroke="#505050"/><path d="M10 260.8H13" stroke="#505050"/><path d="M8.5 264.0H13" stroke="#505050"/><path d="M10 267.2H13" stroke="#505050"/><path d="M10 270.5H13" stroke="#505050"/><path d="M10 273.7H13" stroke="#505050"/><path d="M10 276.9H13" stroke="#505050"/><path d="M0.500 280.2H13"/><path d="M10 283.4H13" stroke="#505050"/><path d="M10 286.6H13" stroke="#505050"/><path d="M10 289.8H13" stroke="#505050"/><path d="M10 293.1H13" stroke="#505050"/><path d="M8.5 296.3H13" stroke="#505050"/><path d="M10 299.5H13" stroke="#505050"/><path d="M10 302.8H13" stroke="#505050"/><path d="M10 306.0H13" stroke="#505050"/><path d="M10 309.2H13" stroke="#505050"/><path d="M0.500 312.4H13"/><path d="M10 315.7H13" stroke="#505050"/><path d="M10 318.9H13" stroke="#505050"/><path d="M10 322.1H13" stroke="#505050"/><path d="M10 325.4H13" stroke="#505050"/><path d="M8.5 328.6H13" stroke="#505050"/><path d="M10 331.8H13" stroke="#505050"/><path d="M10 335.0H13" stroke="#505050"/><path d="M10 338.3H13" stroke="#505050"/><path d="M10 341.5H13" stroke="#505050"/><path d="M0.500 344.7H13"/><path d="M10 347.9H13" stroke="#505050"/><path d="M10 351.2H13" stroke="#505050"/><path d="M10 354.4H13" stroke="#505050"/><path d="M10 357.6H13" stroke="#505050"/><path d="M8.5 360.9H13" stroke="#505050"/><path d="M10 364.1H13" stroke="#505050"/><path d="M10 367.3H13" stroke="#505050"/><path d="M10 370.5H13" stroke="#505050"/><path d="M10 373.8H13" stroke="#505050"/><path d="M0.500 377.0H13"/><path d="M10 380.2H13" stroke="#505050"/><path d="M10 383.5H13" stroke="#505050"/><path d="M10 386.7H13" stroke="#505050"/><path d="M10 389.9H13" stroke="#505050"/><path d="M8.5 393.1H13" stroke="#505050"/><path d="M10 396.4H13" stroke="#505050"/><path d="M10 399.6H13" stroke="#505050"/><path d="M10 402.8H13" stroke="#505050"/><path d="M10 406.1H13" stroke="#505050"/><path d="M0.500 409.3H13"/><path d="M10 412.5H13" stroke="#505050"/><path d="M10 415.7H13" stroke="#505050"/><path d="M10 419.0H13" stroke="#505050"/><path d="M10 422.2H13" stroke="#505050"/><path d="M8.5 425.4H13" stroke="#505050"/><path d="M10 428.6H13" stroke="#505050"/><path d="M10 431.9H13" stroke="#505050"/><path d="M10 435.1H13" stroke="#505050"/><path d="M10 438.3H13" stroke="#505050"/><path d="M0.500 441.6H13"/><path d="M10 444.8H13" stroke="#505050"/><path d="M10 448.0H13" stroke="#505050"/><path d="M10 451.2H13" stroke="#505050"/><path d="M10 454.5H13" stroke="#505050"/><path d="M8.5 457.7H13" stroke="#505050"/><path d="M10 460.9H13" stroke="#505050"/><path d="M10 464.2H13" stroke="#505050"/><path d="M10 467.4H13" stroke="#505050"/><path d="M10 470.6H13" stroke="#505050"/><path d="M0.500 473.8H13"/><path d="M10 477.1H13" stroke="#505050"/><path d="M10 480.3H13" stroke="#505050"/><path d="M10 483.5H13" stroke="#505050"/><path d="M10 486.8H13" stroke="#505050"/><path d="M8.5 490.0H13" stroke="#505050"/><path d="M10 493.2H13" stroke="#505050"/><path d="M10 496.4H13" stroke="#505050"/><path d="M10 499.7H13" stroke="#505050"/><path d="M10 502.9H13" stroke="#505050"/><path d="M0.500 506.1H13"/><path d="M10 509.3H13" stroke="#505050"/><path d="M10 512.6H13" stroke="#505050"/><path d="M10 515.8H13" stroke="#505050"/><path d="M10 519.0H13" stroke="#505050"/><path d="M8.5 522.3H13" stroke="#505050"/><path d="M10 525.5H13" stroke="#505050"/><path d="M10 528.7H13" stroke="#505050"/><path d="M10 531.9H13" stroke="#505050"/><path d="M10 535.2H13" stroke="#505050"/><path d="M0.500 538.4H13"/><path d="M10 541.6H13" stroke="#505050"/><path d="M10 544.9H13" stroke="#505050"/><path d="M10 548.1H13" stroke="#505050"/><path d="M10 551.3H13" stroke="#505050"/><path d="M8.5 554.5H13" stroke="#505050"/><path d="M10 557.8H13" stroke="#505050"/><path d="M10 561.0H13" stroke="#505050"/><path d="M10 564.2H13" stroke="#505050"/><path d="M10 567.5H13" stroke="#505050"/><path d="M0.500 570.7H13"/><path d="M10 573.9H13" stroke="#505050"/><path d="M10 577.1H13" stroke="#505050"/><path d="M10 580.4H13" stroke="#505050"/><path d="M10 583.6H13" stroke="#505050"/><path d="M8.5 586.8H13" stroke="#505050"/><path d="M10 590.0H13" stroke="#505050"/><path d="M10 593.3H13" stroke="#505050"/><path d="M10 596.5H13" stroke="#505050"/><path d="M10 599.7H13" stroke="#505050"/><path d="M0.500 603.0H13"/><path d="M10 606.2H13" stroke="#505050"/><path d="M10 609.4H13" stroke="#505050"/><path d="M10 612.6H13" stroke="#505050"/><path d="M10 615.9H13" stroke="#505050"/><path d="M8.5 619.1H13" stroke="#505050"/><path d="M10 622.3H13" stroke="#505050"/><path d="M10 625.6H13" stroke="#505050"/><path d="M10 628.8H13" stroke="#505050"/><path d="M10 632.0H13" stroke="#505050"/><path d="M0.500 635.2H13"/><path d="M10 638.5H13" stroke="#505050"/><path d="M10 641.7H13" stroke="#505050"/><path d="M10 644.9H13" stroke="#505050"/><path d="M10 648.2H13" stroke="#505050"/><path d="M8.5 651.4H13" stroke="#505050"/><path d="M10 654.6H13" stroke="#505050"/><path d="M10 657.8H13" stroke="#505050"/><path d="M10 661.1H13" stroke="#505050"/><path d="M10 664.3H13" stroke="#505050"/></g></svg>
<span class="t rl" style="left:52.600px;top:87.6px">0</span>
<span class="t rl" style="left:52.600px;top:111.5px">1</span>
<span class="t rl" style="left:52.600px;top:119.9px">0</span>
<span class="t rl" style="left:52.600px;top:143.8px">0</span>
<span class="t rl" style="left:52.600px;top:176.1px">1</span>
<span class="t rl" style="left:52.600px;top:184.4px">0</span>
<span class="t rl" style="left:52.600px;top:208.4px">2</span>
<span class="t rl" style="left:52.600px;top:216.7px">0</span>
<span class="t rl" style="left:52.600px;top:240.6px">3</span>
<span class="t rl" style="left:52.600px;top:249.0px">0</span>
<span class="t rl" style="left:52.600px;top:272.9px">4</span>
<span class="t rl" style="left:52.600px;top:281.3px">0</span>
<span class="t rl" style="left:52.600px;top:305.2px">5</span>
<span class="t rl" style="left:52.600px;top:313.6px">0</span>
<span class="t rl" style="left:52.600px;top:337.5px">6</span>
<span class="t rl" style="left:52.600px;top:345.8px">0</span>
<span class="t rl" style="left:52.600px;top:369.8px">7</span>
<span class="t rl" style="left:52.600px;top:378.1px">0</span>
<span class="t rl" style="left:52.600px;top:402.0px">8</span>
<span class="t rl" style="left:52.600px;top:410.4px">0</span>
<span class="t rl" style="left:52.600px;top:434.3px">9</span>
<span class="t rl" style="left:52.600px;top:442.7px">0</span>
<span class="t rl" style="left:52.600px;top:466.6px">1</span>
<span class="t rl" style="left:52.600px;top:474.9px">0</span>
<span class="t rl" style="left:52.600px;top:483.3px">0</span>
<span class="t rl" style="left:52.600px;top:498.9px">1</span>
<span class="t rl" style="left:52.600px;top:507.2px">1</span>
<span class="t rl" style="left:52.600px;top:515.6px">0</span>
<span class="t rl" style="left:52.600px;top:531.2px">1</span>
<span class="t rl" style="left:52.600px;top:539.5px">2</span>
<span class="t rl" style="left:52.600px;top:547.9px">0</span>
<span class="t rl" style="left:52.600px;top:563.4px">1</span>
<span class="t rl" style="left:52.600px;top:571.8px">3</span>
<span class="t rl" style="left:52.600px;top:580.1px">0</span>
<span class="t rl" style="left:52.600px;top:595.7px">1</span>
<span class="t rl" style="left:52.600px;top:604.1px">4</span>
<span class="t rl" style="left:52.600px;top:612.4px">0</span>
<span class="t rl" style="left:52.600px;top:628.0px">1</span>
<span class="t rl" style="left:52.600px;top:636.4px">5</span>
<span class="t rl" style="left:52.600px;top:644.7px">0</span>
<span class="t rl" style="left:52.600px;top:660.3px">1</span>
<span class="t rl" style="left:52.600px;top:668.6px">6</span>
<span class="t rl" style="left:52.600px;top:677.0px">0</span>
<span class="t rl" style="left:52.600px;top:692.6px">1</span>
<span class="t rl" style="left:52.600px;top:700.9px">7</span>
<span class="t rl" style="left:52.600px;top:709.3px">0</span>
<span class="t rl" style="left:52.600px;top:724.8px">1</span>
<span class="t rl" style="left:52.600px;top:733.2px">8</span>
<span class="t rl" style="left:52.600px;top:741.5px">0</span>
<div class="a" style="left:822px;top:77px;width:1px;height:6.500px;background:#e0e0e0"></div>
<div class="a" style="left:52px;top:602.200px;width:7px;height:1px;background:#e0e0e0"></div>
<!-- canvas -->
<div class="a" style="left:64px;top:88px;width:828px;height:666px;background:#232323"></div>
<div class="a" style="left:892px;top:88px;width:12px;height:666px;background:#404040"></div>
<div class="a" style="left:281.500px;top:140.200px;width:393.700px;height:562.300px;background:#050505"></div>
<div class="a" id="doc" style="left:283px;top:141.600px;width:390.700px;height:559.500px;background:#fff"></div>
<div class="a" style="left:51px;top:754px;width:853px;height:5px;background:#454545"></div>
<div class="a" style="left:94px;top:755px;width:126px;height:4px;background:#3d3d3d"></div>
<span class="t" style="left:58px;top:755.500px;font-size:8.500px;color:#d8d8d8">66.67%</span>
<span class="t" style="left:114px;top:755.500px;font-size:7.600px;color:#d8d8d8">ファイル：11.4M/9.54M</span>
<svg style="left:214px;top:756px" width="4" height="6" viewBox="0 0 4 6"><path d="M0.500 0.500l2.500 3-2.500 3" stroke="#d0d0d0" fill="none"/></svg>
<svg style="left:0;top:0" width="1350" height="759" viewBox="0 0 1350 759"><path d="M823.100 601.200L822.500 612.600 830.200 608.400z" fill="#080808" stroke="#8e8e8e" stroke-width="0.900" stroke-linejoin="round"/><path d="M833.700 606.300l5.800 5.800-5.800 5.800-5.800-5.800z" fill="#9c9c9c"/><g fill="#111"><circle cx="833.700" cy="612.100" r="0.800"/><circle cx="833.700" cy="608.900" r="0.800"/><circle cx="833.700" cy="615.300" r="0.800"/><circle cx="830.500" cy="612.100" r="0.800"/><circle cx="836.900" cy="612.100" r="0.800"/></g></svg>
<!-- figure -->
<svg style="left:0;top:0" width="1350" height="759" viewBox="0 0 1350 759" fill="none" stroke="#0a0a0a" stroke-width="1.35" stroke-linecap="round" stroke-linejoin="round">
<path d="M447.4,234.5 L451.1,235.0 L460.6,239.8 L466.9,242.4 M447.4,234.5 L449.0,238.7 L452.7,245.5 L455.8,249.8 M448.8,235.3 L457.4,240.8 L465.8,245.0 L472.1,250.3 L479.5,258.7 L486.9,269.3 L492.2,277.7 M466.9,242.4 L472.1,239.8 L477.4,238.5 L481.6,239.2 L489.0,244.5 L495.3,247.7 L499.8,250.3 L501.1,255.6 L500.4,260.8 L500.1,266.1 L501.7,271.4 L499.5,275.6 L495.9,279.8 L492.2,277.7 M478.5,240.8 L488.5,246.6 M483.7,259.8 L485.3,258.2 L491.1,264.0 L489.0,266.1 Z M492.2,272.9 L493.2,276.4 L495.5,275.6 M455.8,249.8 L452.7,255.6 L450.0,260.3 L449.5,264.0 L447.4,269.8 L448.4,272.4 L450.5,272.9 L448.4,275.6 L449.5,277.7 L449.0,279.8 L450.0,281.4 L447.4,285.6 L448.4,288.8 L451.6,290.3 L455.3,289.8 L460.6,288.2 L464.8,287.0 M455.3,290.1 L456.3,294.5 L458.5,299.8 L461.6,305.0 M454.8,257.9 L461.6,260.3 L469.0,263.1 M450.3,261.9 C450.3,258.5 455.0,258.5 455.0,261.9 C455.0,265.6 450.3,265.6 450.3,261.9 Z M475.3,274.5 C476.4,269.3 480.6,267.1 483.2,268.7 C484.8,271.4 482.7,276.6 476.4,278.2 M477.9,274.5 C479.0,271.9 480.6,270.8 481.6,271.4 M470.6,285.6 L472.1,284.0 M474.3,286.6 L477.4,285.1 M463.5,272.6 L464.1,273.3 M472.1,305.0 L475.3,299.3 L479.5,295.8 L484.8,294.8 L489.5,294.8 L493.2,298.8 M476.4,298.8 L479.5,297.2 L489.0,296.7 L492.2,299.3 M480.6,297.5 L482.2,300.3 M483.2,297.3 L484.8,300.0 M485.8,297.1 L487.4,299.8 M488.5,297.1 L490.1,299.6 M455.8,290.0 L456.9,296.3 L459.5,301.6 L462.7,307.9 L464.8,310.5 M462.1,313.7 L464.8,310.5 L476.4,300.0 L479.5,297.9 M463.2,316.9 L466.4,313.7 L477.9,302.6 L481.1,301.1 M462.1,313.7 L463.2,316.9 M493.2,300.0 L489.0,300.5 L481.1,301.1 M493.2,300.0 L497.4,307.9 L503.8,317.4 L510.1,329.0 L514.3,339.5 L516.9,349.0 L518.0,358.5 L518.0,370.0 M463.2,316.9 L462.1,324.8 L460.0,335.3 L456.3,350.1 L452.7,363.8 L451.1,370.0 M465.3,324.2 L463.7,332.1 L462.1,342.7 L463.2,353.2 L463.7,359.5 M474.3,329.5 L470.0,334.3 L464.8,339.5 L462.7,343.7 M476.4,330.0 L472.1,339.5 L466.9,352.2 L462.7,363.8 L460.6,370.0 M477.9,331.1 L474.3,342.7 L472.1,344.8 M474.3,329.5 L478.5,329.5 L480.6,331.6 L489.0,336.4 L495.3,341.6 L498.5,345.8 M479.5,311.1 L478.5,319.5 L477.9,329.0 M481.6,316.9 L481.1,324.8 L480.1,329.5 M478.5,334.3 L476.4,349.0 L475.8,363.8 L476.4,370.0 M480.6,335.3 L481.6,349.0 L482.2,363.8 L482.7,370.0 M487.4,339.5 L491.1,351.1 L494.3,361.7 M496.4,324.2 L497.4,332.1 L499.0,339.5 L498.5,345.8 M504.3,329.5 L503.8,335.3 L500.6,342.7 L498.5,345.8 M498.5,345.8 L499.0,353.2 L498.5,370.0 M512.2,340.6 L511.1,349.0 L510.6,353.2 M515.4,358.5 L515.9,363.8 L515.4,370.0 M479.5,363.8 L480.6,370.0 M454.8,364.8 L453.7,370.0 M454.9,360.0 L451.7,370.1 L449.8,380.2 L449.2,390.3 L450.5,394.1 M449.2,391.6 L439.1,404.3 L430.9,415.6 L422.6,428.9 M463.1,360.0 L459.3,372.6 L457.4,385.3 L458.1,394.1 L460.6,398.6 M466.9,372.6 L468.2,379.0 L466.9,384.7 L460.6,387.2 M477.0,362.5 L474.5,372.6 L473.2,382.8 L472.0,391.6 L465.6,397.9 L461.8,403.0 M483.3,363.8 L484.0,375.2 L482.7,385.3 L482.1,392.9 L475.8,401.7 L465.6,410.6 M498.5,360.0 L498.5,372.6 L497.3,389.1 L493.5,399.2 L485.9,409.9 M515.0,360.0 L514.3,372.6 L513.1,385.3 L511.2,397.9 L509.9,405.5 M517.5,360.0 L517.5,375.2 L516.2,392.9 L514.3,404.3 M447.9,428.9 L455.5,425.8 L468.2,419.4 L483.3,411.2 L496.0,410.6 L506.1,405.5 L514.3,404.3 M446.7,434.6 L453.0,436.5 L465.6,435.9 L478.3,432.1 L490.9,430.2 L506.1,427.0 L513.7,423.2 M514.3,404.3 L515.0,414.4 L513.7,423.2 M426.4,425.8 L432.8,437.8 M429.0,423.9 L435.9,436.5 M431.5,422.0 L439.1,435.2 M433.6,421.0 L442.2,434.0 M424.5,427.7 L430.2,439.7 M422.6,428.9 L421.4,435.9 L423.9,439.7 L430.2,440.9 L431.8,439.0 M425.2,435.9 L430.2,439.0 M431.8,439.0 L444.1,434.6 L446.7,430.8 L447.9,428.9 M451.7,437.1 L447.9,447.3 L444.1,456.0 M454.3,437.8 L450.5,448.5 L447.3,456.0 M456.2,438.4 L453.0,448.5 L449.8,456.0 M472.0,435.2 L473.2,443.5 L477.0,451.0 L478.9,456.0 M480.8,434.6 L479.5,440.9 L480.2,448.5 M482.7,435.9 L482.1,442.2 L485.9,439.7 L488.4,439.0 M490.9,430.8 L489.0,440.9 L488.4,456.0 M493.5,432.1 L498.5,433.3 L506.1,435.9 L515.0,435.9 M513.7,423.2 L515.0,430.8 L515.0,435.9 L513.1,446.0 L511.2,456.0 M506.1,427.0 L504.8,433.3 M503.6,446.0 L498.5,451.0 L493.5,456.0 M508.6,448.5 L506.1,456.0 M451.5,428.8 L450.1,434.9 M454.0,426.6 L453.5,435.2 M456.4,428.8 L455.6,435.6 M460.2,426.3 L458.9,436.0 M463.2,424.7 L461.1,435.0 M464.6,424.6 L464.2,435.0 M466.8,424.2 L466.4,434.9 M471.3,422.1 L469.3,433.2 M473.5,419.6 L471.6,432.6 M475.6,416.3 L475.1,432.7 M478.9,417.5 L477.8,431.7 M480.9,414.9 L479.9,430.9 M484.5,415.5 L482.5,429.9 M487.6,415.1 L485.4,430.7 M490.3,416.3 L488.0,429.7 M491.6,415.6 L490.9,429.3 M493.5,415.6 L493.1,428.2 M497.0,412.9 L495.1,429.0 M499.9,414.4 L498.1,428.5 M501.9,412.1 L501.6,427.4 M506.4,409.4 L504.1,425.9 M506.9,409.3 L506.5,426.8 M509.9,408.8 L508.8,425.3 M513.1,406.5 L511.0,422.8 M451.0,440.0 L445.3,450.1 L440.2,461.5 L438.3,472.9 L437.7,488.1 L439.0,503.2 L437.7,515.9 L439.0,526.0 L442.8,536.0 M454.1,440.0 L449.1,451.4 L445.3,462.8 L443.4,475.4 M457.3,440.0 L451.6,451.4 L447.2,465.3 L444.7,476.0 M447.2,469.7 L449.7,470.3 L450.3,481.7 M445.3,492.5 L442.8,500.7 L440.2,510.8 M443.4,514.0 L442.1,522.2 L441.5,528.5 M514.2,440.0 L508.5,456.4 L504.7,471.6 L499.7,489.3 L495.9,500.7 L492.1,512.1 L487.0,522.2 L485.1,523.5 M509.8,443.8 L507.3,452.6 L500.9,465.3 L494.6,472.9 L487.0,483.0 M504.1,445.7 L495.9,452.6 L487.0,459.0 M502.2,447.6 L495.9,457.7 L492.1,464.0 M507.3,451.4 L500.9,461.5 L495.9,467.2 M487.0,459.0 L488.3,464.0 L492.7,467.8 L494.6,471.6 M472.5,440.0 L475.6,447.6 L479.4,452.6 L478.2,459.0 L475.6,465.3 L475.0,476.7 M479.4,440.0 L482.0,445.1 L480.7,451.4 M485.8,440.0 L487.0,446.3 L485.8,452.6 L487.0,457.7 M463.6,470.3 L470.6,464.0 L476.9,459.6 L484.5,459.0 M463.6,470.3 L468.1,469.1 M482.6,473.5 L475.6,481.7 L461.7,496.9 L447.8,512.7 L446.6,517.1 M483.2,476.7 L474.4,488.1 L461.7,502.0 L450.3,515.9 L449.1,520.9 M482.6,473.5 L483.2,476.7 M487.0,485.5 L483.2,491.8 L480.7,500.7 L478.2,508.3 L470.6,513.3 L469.3,515.9 L474.4,518.4 L479.4,517.1 L478.2,520.9 L473.1,520.9 M474.4,498.8 L469.3,504.5 M463.0,512.1 L456.7,514.6 L451.6,519.7 L454.1,522.8 M465.5,518.4 L460.5,520.9 L459.8,523.5 M474.4,520.9 L463.0,523.5 L460.5,527.3 L459.8,532.9 L464.3,531.0 L470.6,527.3 L475.6,526.0 M480.7,522.2 L479.4,526.0 L475.6,531.0 L470.6,534.2 M495.9,503.2 L494.6,510.8 L492.7,520.9 L494.6,528.5 L495.9,536.0 M485.8,522.2 L487.0,528.5 L492.1,533.6 L495.9,536.0 M438.7,525.0 L445.8,537.7 L452.1,553.5 L460.0,572.4 L466.4,588.3 L471.9,600.9 L475.1,605.7 M445.8,537.7 L461.6,550.3 L477.4,566.1 L493.3,577.2 L505.9,585.1 L512.2,585.1 M493.3,525.0 L498.0,532.9 L505.9,542.4 L515.4,550.3 L524.9,556.6 L532.8,558.2 M515.4,550.3 L513.8,556.6 L517.0,564.5 L516.2,570.9 L512.2,577.2 L509.1,581.9 M509.1,548.7 L513.8,556.6 M509.1,581.9 L518.6,574.0 L528.1,566.1 L531.2,560.6 M512.2,585.1 L524.9,577.2 L537.5,567.7 L540.7,563.0 M518.6,584.3 L531.2,577.2 L542.3,567.7 M526.5,557.4 L531.2,560.6 L540.7,563.0 L543.9,564.5 M459.3,532.1 L461.6,533.7 L469.5,526.6 M471.9,534.5 L477.4,529.7 M480.6,540.8 L488.5,536.1 L493.3,542.4 M496.4,544.0 L499.6,542.4 M499.6,567.7 L505.9,566.9 L512.2,570.9 M491.7,568.5 L499.6,572.4 M468.0,558.2 L469.5,572.4 L472.7,588.3 L477.4,599.3 L480.6,604.1 M471.1,560.6 L471.9,572.4 L475.1,586.7 L482.2,599.3 M498.0,579.6 L499.6,593.0 L501.2,604.1 L503.5,613.6 L504.3,619.9 M485.4,580.4 L488.5,585.1 L493.3,591.4 L496.4,599.3 M480.6,589.8 L483.8,599.3 L484.6,602.5 M475.1,605.7 L482.2,607.2 L493.3,610.4 L501.2,607.2 M485.4,608.8 L490.1,613.6 M488.5,608.8 L493.3,615.1 M492.5,610.4 L496.4,616.7 M477.4,610.4 L483.8,615.9 L493.3,619.9 L503.5,619.9 M442.7,628.6 L444.2,634.1 L450.6,635.7 L469.5,634.1 L493.3,631.8 L505.9,631.0 L507.0,627.8 L504.3,626.2 M442.7,628.6 L445.8,625.4 L453.7,623.1 L461.6,618.3 L469.5,613.6 L472.7,610.4 L477.4,611.2 M477.4,611.2 L479.0,616.7 L482.2,619.9 L493.3,623.1 L504.3,621.5 L504.3,626.2 M444.2,631.0 L461.6,630.2 L482.2,628.6 L505.9,627.0 M458.5,623.1 L461.6,619.9 M462.4,621.5 L465.6,618.3 M466.4,619.9 L469.5,615.9 M469.5,618.3 L472.7,614.4 M472.7,610.4 L477.4,613.6 L475.9,619.9 L477.4,623.1 M450.6,623.8 L452.1,629.4 M543.9,564.5 L548.6,565.3 L550.2,572.4 L547.8,588.3 L543.9,602.5 L539.1,615.1 L534.4,624.6 L531.2,628.6 M544.7,568.5 L543.9,581.9 L540.7,596.2 L536.0,610.4 L531.2,621.5 L528.1,626.2 M524.9,618.3 L524.1,623.1 L531.2,628.6 M524.9,618.3 L527.3,612.8 L532.8,615.1 L531.2,621.5 M518.6,585.1 L517.0,589.8 L521.7,594.6 L520.9,599.3 L524.9,600.9 L524.9,607.2 L527.3,612.8 M523.3,588.3 L528.1,587.5 L524.9,593.0 L531.2,592.2 L526.5,597.8 L531.2,597.8 L527.3,603.3 L531.2,604.1 L528.1,608.8 M531.2,585.1 L532.8,588.3 L529.6,589.8 M540.7,577.2 L543.1,585.1"/>
<path fill="#0c0c0c" stroke-width="0.600" d="M456.3,245.5 L460.6,244.0 L465.8,245.5 L472.1,251.3 L478.5,259.8 L482.7,267.1 L480.6,268.2 L476.4,270.3 L472.1,274.5 L470.0,271.4 L472.1,267.1 L469.0,264.0 L470.0,259.8 L466.9,255.6 L463.7,251.3 L461.6,253.5 L459.5,250.3 L456.3,252.4 L455.3,250.3 Z M484.8,271.4 L489.0,274.5 L492.2,278.2 L493.2,281.9 L489.0,287.2 L485.8,292.4 L483.7,293.5 L483.2,284.0 L484.8,277.7 Z M467.9,246.1 L474.3,252.4 L479.5,259.8 L477.9,259.8 L472.1,252.9 L466.9,247.7 Z"/>
<path stroke-width="1.800" d="M445.8,634.6 L458.5,634.1"/>
<path stroke="#fff" stroke-width="0.700" d="M461.6,248.7 L464.2,254.0 M466.4,250.8 L469.2,256.6 M471.3,256.6 L473.2,262.1 M475.3,262.1 L477.2,267.1 M486.9,277.7 L487.7,284.0"/>
</svg>
<!-- middle panel column -->
<div class="a" style="left:904px;top:55px;width:446px;height:10px;background:#373737"></div>
<div class="a" style="left:904px;top:65px;width:225px;height:694px;background:#383838"></div>
<div class="a" style="left:906px;top:65px;width:220.500px;height:694px;background:#4a4a4a"></div>
<svg style="left:1116.500px;top:58px" width="6" height="4" viewBox="0 0 6 4" fill="none" stroke="#dadada" stroke-width="1"><path d="M0.700 0.300L2.500 2 0.700 3.700M3.500 0.300L5.300 2 3.500 3.700"/></svg>
<svg style="left:1339.500px;top:58px" width="6" height="4" viewBox="0 0 6 4" fill="none" stroke="#dadada" stroke-width="1"><path d="M0.700 0.300L2.500 2 0.700 3.700M3.500 0.300L5.300 2 3.500 3.700"/></svg>
<div class="pbar" style="left:906px;top:65px;width:220.5px;height:19px"></div>
<div class="a" style="left:906.0px;top:65.0px;width:28.0px;height:19.0px;background:#4a4a4a"></div>
<span class="pt" style="left:912.5px;top:70.0px">文字</span>
<svg style="left:1116.0px;top:71.1px" width="7" height="5.400" viewBox="0 0 7 5.400"><rect width="7" height="5.400" fill="#7c7c7c"/><path d="M0 1.800h7M0 3.600h7" stroke="#6a6a6a" stroke-width="0.500"/></svg>
<div class="a" style="left:910.0px;top:94.5px;width:91.0px;height:11.5px;background:#3c3c3c;border:1px solid #585858;border-radius:1.5px"></div>
<div class="a" style="left:992.5px;top:95.5px;width:1px;height:9.5px;background:#585858"></div>
<svg style="left:994.3px;top:98.8px" width="5.4" height="3.24" viewBox="0 0 6 3.600"><path fill="none" stroke="#dedede" stroke-width="1.350" stroke-linecap="round" stroke-linejoin="round" d="M0.800 0.700L3 2.900l2.200-2.200"/></svg>
<span class="val" style="left:912.5px;top:95.8px">News Cycle</span>
<div class="a" style="left:1007.5px;top:94.5px;width:58.5px;height:11.5px;background:#3c3c3c;border:1px solid #585858;border-radius:1.5px"></div>
<div class="a" style="left:1057.0px;top:95.5px;width:1px;height:9.5px;background:#585858"></div>
<svg style="left:1059.1px;top:98.8px" width="5.4" height="3.24" viewBox="0 0 6 3.600"><path fill="none" stroke="#dedede" stroke-width="1.350" stroke-linecap="round" stroke-linejoin="round" d="M0.800 0.700L3 2.900l2.200-2.200"/></svg>
<span class="val" style="left:1010.0px;top:95.8px">Bold</span>
<div class="a" style="left:925.0px;top:112.5px;width:61.0px;height:12.0px;background:#3c3c3c;border:1px solid #585858;border-radius:1.5px"></div>
<div class="a" style="left:976.5px;top:113.5px;width:1px;height:10.0px;background:#585858"></div>
<svg style="left:978.8px;top:117.1px" width="5.4" height="3.24" viewBox="0 0 6 3.600"><path fill="none" stroke="#dedede" stroke-width="1.350" stroke-linecap="round" stroke-linejoin="round" d="M0.800 0.700L3 2.900l2.200-2.200"/></svg>
<span class="val" style="left:927.5px;top:114.0px">99.8 pt</span>
<div class="a" style="left:1008.7px;top:112.5px;width:55.8px;height:12.0px;background:#3c3c3c;border:1px solid #585858;border-radius:1.5px"></div>
<div class="a" style="left:1055.0px;top:113.5px;width:1px;height:10.0px;background:#585858"></div>
<svg style="left:1057.3px;top:117.1px" width="5.4" height="3.24" viewBox="0 0 6 3.600"><path fill="none" stroke="#dedede" stroke-width="1.350" stroke-linecap="round" stroke-linejoin="round" d="M0.800 0.700L3 2.900l2.200-2.200"/></svg>
<span class="val" style="left:1011.2px;top:114.0px">115.97 pt</span>
<div class="a" style="left:925.0px;top:128.0px;width:61.0px;height:11.5px;background:#3c3c3c;border:1px solid #585858;border-radius:1.5px"></div>
<div class="a" style="left:976.5px;top:129.0px;width:1px;height:9.5px;background:#585858"></div>
<svg style="left:978.8px;top:132.3px" width="5.4" height="3.24" viewBox="0 0 6 3.600"><path fill="none" stroke="#dedede" stroke-width="1.350" stroke-linecap="round" stroke-linejoin="round" d="M0.800 0.700L3 2.900l2.200-2.200"/></svg>
<div class="a" style="left:1008.7px;top:128.0px;width:55.8px;height:11.5px;background:#3c3c3c;border:1px solid #585858;border-radius:1.5px"></div>
<div class="a" style="left:1055.0px;top:129.0px;width:1px;height:9.5px;background:#585858"></div>
<svg style="left:1057.3px;top:132.3px" width="5.4" height="3.24" viewBox="0 0 6 3.600"><path fill="none" stroke="#dedede" stroke-width="1.350" stroke-linecap="round" stroke-linejoin="round" d="M0.800 0.700L3 2.900l2.200-2.200"/></svg>
<span class="val" style="left:1011.2px;top:129.2px">0</span>
<div class="a" style="left:925.0px;top:143.7px;width:61.0px;height:11.3px;background:#3c3c3c;border:1px solid #585858;border-radius:1.5px"></div>
<div class="a" style="left:976.5px;top:144.7px;width:1px;height:9.3px;background:#585858"></div>
<svg style="left:978.8px;top:147.9px" width="5.4" height="3.24" viewBox="0 0 6 3.600"><path fill="none" stroke="#dedede" stroke-width="1.350" stroke-linecap="round" stroke-linejoin="round" d="M0.800 0.700L3 2.900l2.200-2.200"/></svg>
<span class="val" style="left:927.5px;top:144.8px">0%</span>
<div class="a" style="left:925.0px;top:158.7px;width:37.5px;height:11.3px;background:#3c3c3c;border:1px solid #585858;border-radius:1.5px"></div>
<span class="val" style="left:927.5px;top:159.8px">100%</span>
<div class="a" style="left:1028.0px;top:158.7px;width:38.0px;height:11.3px;background:#3c3c3c;border:1px solid #585858;border-radius:1.5px"></div>
<span class="val" style="left:1030.5px;top:159.8px">100%</span>
<div class="a" style="left:925.0px;top:174.5px;width:37.5px;height:11.0px;background:#3c3c3c;border:1px solid #585858;border-radius:1.5px"></div>
<span class="val" style="left:927.5px;top:175.5px">0 pt</span>
<span class="lab" style="left:998.500px;top:175px">カラー<span class="co">：</span></span>
<div class="a" style="left:1027.500px;top:172.500px;width:38.800px;height:14.300px;background:#45c8ff;border:1px solid #2e2e2e"></div>
<svg style="left:911.0px;top:113.0px" width="13" height="11" viewBox="0 0 13 11"><text x="0" y="10" font-family="Liberation Serif,serif" font-weight="bold" font-size="6.500" fill="#e8e8e8">T</text><text x="4.300" y="10" font-family="Liberation Serif,serif" font-weight="bold" font-size="12" fill="#e8e8e8">T</text></svg>
<svg style="left:994.5px;top:112.5px" width="12" height="12" viewBox="0 0 12 12"><text x="3.800" y="5.800" font-family="Liberation Serif,serif" font-weight="bold" font-size="7" fill="#e8e8e8">A</text><text x="3.800" y="11.800" font-family="Liberation Serif,serif" font-weight="bold" font-size="7" fill="#e8e8e8">A</text><path d="M1.300 4.500v4M0.300 5.500L1.300 4.200l1 1.300M0.300 7.500l1 1.300 1-1.300" stroke="#e8e8e8" stroke-width="0.700" fill="none"/></svg>
<svg style="left:910.5px;top:128.5px" width="13" height="12" viewBox="0 0 13 12"><text x="0" y="7.500" font-family="Liberation Sans,sans-serif" font-size="7.500" fill="#e8e8e8">V</text><text x="6" y="9" font-family="Liberation Sans,sans-serif" font-size="7.500" fill="#e8e8e8">A</text><path d="M4.500 9L7.500 1" stroke="#e8e8e8" stroke-width="0.600"/><path d="M0.500 11h11M2 9.800L0.500 11 2 12.200" stroke="#e8e8e8" stroke-width="0.700" fill="none"/></svg>
<svg style="left:994.5px;top:128.5px" width="13" height="12" viewBox="0 0 13 12"><rect x="1" y="0" width="11" height="8" fill="#e8e8e8"/><text x="1.300" y="7" font-family="Liberation Sans,sans-serif" font-weight="bold" font-size="7.500" fill="#4a4a4a" letter-spacing="-0.8">VA</text><path d="M0.500 10.500h12M2 9.300L0.500 10.500 2 11.700M11 9.300l1.500 1.200L11 11.700" stroke="#e8e8e8" stroke-width="0.700" fill="none"/></svg>
<svg style="left:911.5px;top:143.5px" width="12" height="12" viewBox="0 0 12 12"><rect x="1" y="0.500" width="9" height="7" fill="none" stroke="#e8e8e8" stroke-width="0.600" stroke-dasharray="1 0.800"/><text x="2.200" y="6.600" font-family="Noto Sans CJK JP,sans-serif" font-size="6.500" fill="#e8e8e8">あ</text><path d="M0.500 10.500h4M3.300 9.300l1.500 1.200-1.500 1.200M11 10.500H7M8.200 9.300l-1.500 1.200 1.500 1.200" stroke="#e8e8e8" stroke-width="0.700" fill="none"/></svg>
<svg style="left:910.5px;top:158.5px" width="13" height="12" viewBox="0 0 13 12"><path d="M1.500 1.500v9M0.200 2.800L1.500 1l1.300 1.800M0.200 9.200l1.300 1.800 1.300-1.800" stroke="#e8e8e8" stroke-width="0.700" fill="none"/><text x="4" y="11" font-family="Liberation Serif,serif" font-weight="bold" font-size="12.500" fill="#e8e8e8">T</text></svg>
<svg style="left:1013.5px;top:157.5px" width="13" height="14" viewBox="0 0 13 14"><text x="1.800" y="9.500" font-family="Liberation Serif,serif" font-weight="bold" font-size="11.500" fill="#e8e8e8">T</text><path d="M0.500 12h12M2 10.800L0.500 12 2 13.200M11 10.800l1.500 1.200L11 13.200" stroke="#e8e8e8" stroke-width="0.700" fill="none"/></svg>
<svg style="left:911.0px;top:174.0px" width="13" height="12" viewBox="0 0 13 12"><text x="0" y="9" font-family="Liberation Sans,sans-serif" font-size="9" fill="#e8e8e8">A</text><text x="7" y="5" font-family="Liberation Sans,sans-serif" font-size="5" fill="#e8e8e8">a</text><path d="M9 6v5.500M7.800 10l1.200 1.500 1.200-1.500M7.800 7.500L9 6l1.200 1.500" stroke="#e8e8e8" stroke-width="0.600" fill="none"/></svg>
<svg style="left:921.5px;top:189.9px" width="16" height="14" viewBox="0 0 16 14"><text x="8.0" y="11" text-anchor="middle" font-family="Liberation Serif,serif" font-weight="bold" font-size="11.5" fill="#e8e8e8" stroke="#e8e8e8" stroke-width="0.500">T</text></svg>
<svg style="left:938.2px;top:189.9px" width="16" height="14" viewBox="0 0 16 14"><text x="8.0" y="11" text-anchor="middle" font-family="Liberation Serif,serif" font-weight="bold" font-size="11" fill="#e8e8e8" font-style="italic" font-weight="normal">T</text></svg>
<svg style="left:954.5px;top:189.9px" width="16" height="14" viewBox="0 0 16 14"><text x="8.0" y="11" text-anchor="middle" font-family="Liberation Serif,serif" font-weight="bold" font-size="10.5" fill="#e8e8e8" letter-spacing="-0.5">TT</text></svg>
<svg style="left:972.0px;top:189.9px" width="16" height="14" viewBox="0 0 16 14"><text x="2.500" y="11" font-family="Liberation Serif,serif" font-weight="bold" font-size="10.500" fill="#e8e8e8">T</text><text x="8.700" y="11" font-family="Liberation Serif,serif" font-weight="bold" font-size="7.500" fill="#e8e8e8">T</text></svg>
<svg style="left:989.5px;top:189.9px" width="16" height="14" viewBox="0 0 16 14"><text x="2.500" y="11" font-family="Liberation Serif,serif" font-weight="bold" font-size="10.500" fill="#e8e8e8">T</text><text x="9.500" y="6" font-family="Liberation Serif,serif" font-weight="bold" font-size="5" fill="#e8e8e8">1</text></svg>
<svg style="left:1005.7px;top:189.9px" width="16" height="14" viewBox="0 0 16 14"><text x="2.500" y="11" font-family="Liberation Serif,serif" font-weight="bold" font-size="10.500" fill="#e8e8e8">T</text><text x="9.500" y="12.500" font-family="Liberation Serif,serif" font-weight="bold" font-size="5" fill="#e8e8e8">1</text></svg>
<svg style="left:1022.5px;top:189.9px" width="16" height="14" viewBox="0 0 16 14"><text x="8.0" y="11" text-anchor="middle" font-family="Liberation Serif,serif" font-weight="bold" font-size="10.5" fill="#e8e8e8" >T</text><path d="M4.500 12.800h7" stroke="#e8e8e8" stroke-width="0.800"/></svg>
<svg style="left:1039.0px;top:189.9px" width="16" height="14" viewBox="0 0 16 14"><text x="8.0" y="11" text-anchor="middle" font-family="Liberation Serif,serif" font-weight="bold" font-size="10.5" fill="#e8e8e8" >T</text><path d="M4 7.300h8" stroke="#e8e8e8" stroke-width="0.800"/></svg>
<svg style="left:921.5px;top:210.0px" width="16" height="14" viewBox="0 0 16 14"><text x="8.0" y="11" text-anchor="middle" font-family="Liberation Serif,serif" font-weight="bold" font-size="12" fill="#e8e8e8" font-weight="normal">fi</text></svg>
<svg style="left:938.2px;top:210.0px" width="16" height="14" viewBox="0 0 16 14"><text x="8.0" y="11" text-anchor="middle" font-family="Liberation Serif,serif" font-weight="bold" font-size="11" fill="#858585" font-style="italic" font-weight="normal">&#x1D4B8;</text></svg>
<svg style="left:954.5px;top:210.0px" width="16" height="14" viewBox="0 0 16 14"><text x="8.0" y="11" text-anchor="middle" font-family="Liberation Serif,serif" font-weight="bold" font-size="11" fill="#858585" font-weight="normal">st</text></svg>
<svg style="left:972.0px;top:210.0px" width="16" height="14" viewBox="0 0 16 14"><text x="8.0" y="11" text-anchor="middle" font-family="Liberation Serif,serif" font-weight="bold" font-size="12" fill="#858585" font-style="italic" font-weight="normal">A</text></svg>
<svg style="left:989.5px;top:210.0px" width="16" height="14" viewBox="0 0 16 14"><text x="8.0" y="11" text-anchor="middle" font-family="Liberation Serif,serif" font-weight="bold" font-size="10.5" fill="#858585" font-weight="normal">aa</text><path d="M3.500 3.500h9" stroke="#858585" stroke-width="0.700"/></svg>
<svg style="left:1005.7px;top:210.0px" width="16" height="14" viewBox="0 0 16 14"><text x="8.0" y="11" text-anchor="middle" font-family="Liberation Serif,serif" font-weight="bold" font-size="11" fill="#858585" font-style="italic">T</text></svg>
<svg style="left:1022.5px;top:210.0px" width="16" height="14" viewBox="0 0 16 14"><text x="3" y="11" font-family="Liberation Serif,serif" font-size="11" fill="#858585">1</text><text x="8.200" y="7.500" font-family="Liberation Serif,serif" font-size="6" fill="#858585">st</text></svg>
<svg style="left:1039.0px;top:210.0px" width="16" height="14" viewBox="0 0 16 14"><text x="8.0" y="11" text-anchor="middle" font-family="Liberation Serif,serif" font-weight="bold" font-size="11.5" fill="#858585" font-weight="normal">&#189;</text></svg>
<div class="a" style="left:911.0px;top:228.8px;width:91.0px;height:12.2px;background:#3c3c3c;border:1px solid #585858;border-radius:1.5px"></div>
<span class="lab" style="left:915.5px;top:230.4px">英語 <span class="en">(</span>米国<span class="en">)</span></span>
<svg style="left:992.3px;top:233.6px" width="5.4" height="3.24" viewBox="0 0 6 3.600"><path fill="none" stroke="#dedede" stroke-width="1.350" stroke-linecap="round" stroke-linejoin="round" d="M0.800 0.700L3 2.900l2.200-2.200"/></svg>
<svg style="left:1005.500px;top:229px" width="12" height="12" viewBox="0 0 12 12"><text x="0" y="7" font-family="Liberation Sans,sans-serif" font-size="6.500" fill="#e8e8e8">a</text><text x="4.300" y="10" font-family="Liberation Sans,sans-serif" font-size="9" fill="#e8e8e8">a</text></svg>
<div class="a" style="left:1020.0px;top:228.8px;width:46.0px;height:12.2px;background:#3c3c3c;border:1px solid #585858;border-radius:1.5px"></div>
<span class="lab" style="left:1025.0px;top:230.4px">シャープ</span>
<svg style="left:1057.8px;top:233.6px" width="5.4" height="3.24" viewBox="0 0 6 3.600"><path fill="none" stroke="#dedede" stroke-width="1.350" stroke-linecap="round" stroke-linejoin="round" d="M0.800 0.700L3 2.900l2.200-2.200"/></svg>
<div class="a" style="left:906px;top:243px;width:220.500px;height:4px;background:#383838"></div>
<div class="pbar" style="left:906px;top:247px;width:220.5px;height:19px"></div>
<div class="a" style="left:906.0px;top:247.0px;width:28.0px;height:19.0px;background:#4a4a4a"></div>
<span class="pt" style="left:912.3px;top:252.0px">段落</span>
<div class="a" style="left:934.8px;top:247.0px;width:57.2px;height:19.0px;background:#404040"></div>
<span class="pt dim" style="left:940.3px;top:252.0px">段落スタイル</span>
<div class="a" style="left:992.8px;top:247.0px;width:58.2px;height:19.0px;background:#404040"></div>
<span class="pt dim" style="left:999.2px;top:252.0px">文字スタイル</span>
<svg style="left:1116.0px;top:253.6px" width="7" height="5.400" viewBox="0 0 7 5.400"><rect width="7" height="5.400" fill="#7c7c7c"/><path d="M0 1.800h7M0 3.600h7" stroke="#6a6a6a" stroke-width="0.500"/></svg>
<div class="a" style="left:939px;top:274.500px;width:15px;height:15px;background:#2e2e2e;border-radius:1.5px"></div>
<svg style="left:924.6px;top:277.2px" width="10" height="10" viewBox="0 0 11 10"><g fill="#bdbdbd"><rect x="0" y="0.1" width="9" height="1.600"/><rect x="0" y="2.1" width="11" height="1.600"/><rect x="0" y="4.1" width="9" height="1.600"/><rect x="0" y="6.1" width="11" height="1.600"/><rect x="0" y="8.1" width="9" height="1.600"/></g></svg>
<svg style="left:941.4px;top:277.2px" width="10" height="10" viewBox="0 0 11 10"><g fill="#bdbdbd"><rect x="1" y="0.1" width="9" height="1.600"/><rect x="0" y="2.1" width="11" height="1.600"/><rect x="1" y="4.1" width="9" height="1.600"/><rect x="0" y="6.1" width="11" height="1.600"/><rect x="1" y="8.1" width="9" height="1.600"/></g></svg>
<svg style="left:958.2px;top:277.2px" width="10" height="10" viewBox="0 0 11 10"><g fill="#bdbdbd"><rect x="2" y="0.1" width="9" height="1.600"/><rect x="0" y="2.1" width="11" height="1.600"/><rect x="2" y="4.1" width="9" height="1.600"/><rect x="0" y="6.1" width="11" height="1.600"/><rect x="2" y="8.1" width="9" height="1.600"/></g></svg>
<svg style="left:981.9px;top:277.2px" width="10" height="10" viewBox="0 0 11 10"><g fill="#bdbdbd"><rect x="0" y="0.1" width="11" height="1.600"/><rect x="0" y="2.1" width="11" height="1.600"/><rect x="0" y="4.1" width="11" height="1.600"/><rect x="0" y="6.1" width="11" height="1.600"/><rect x="0" y="8.1" width="6" height="1.600"/></g></svg>
<svg style="left:998.5px;top:277.2px" width="10" height="10" viewBox="0 0 11 10"><g fill="#bdbdbd"><rect x="0" y="0.1" width="11" height="1.600"/><rect x="0" y="2.1" width="11" height="1.600"/><rect x="0" y="4.1" width="11" height="1.600"/><rect x="0" y="6.1" width="11" height="1.600"/><rect x="2.5" y="8.1" width="6" height="1.600"/></g></svg>
<svg style="left:1015.5px;top:277.2px" width="10" height="10" viewBox="0 0 11 10"><g fill="#bdbdbd"><rect x="0" y="0.1" width="11" height="1.600"/><rect x="0" y="2.1" width="11" height="1.600"/><rect x="0" y="4.1" width="11" height="1.600"/><rect x="0" y="6.1" width="11" height="1.600"/><rect x="5" y="8.1" width="6" height="1.600"/></g></svg>
<svg style="left:1039.5px;top:277.2px" width="10" height="10" viewBox="0 0 11 10"><g fill="#bdbdbd"><rect x="0" y="0.1" width="11" height="1.600"/><rect x="0" y="2.1" width="11" height="1.600"/><rect x="0" y="4.1" width="11" height="1.600"/><rect x="0" y="6.1" width="11" height="1.600"/><rect x="0" y="8.1" width="11" height="1.600"/></g></svg>
<div class="a" style="left:927.0px;top:298.7px;width:38.0px;height:11.3px;background:#3c3c3c;border:1px solid #585858;border-radius:1.5px"></div>
<span class="val" style="left:929.5px;top:299.9px">0 pt</span>
<div class="a" style="left:1007.0px;top:298.7px;width:38.6px;height:11.3px;background:#3c3c3c;border:1px solid #585858;border-radius:1.5px"></div>
<span class="val" style="left:1009.5px;top:299.9px">0 pt</span>
<div class="a" style="left:927.0px;top:313.5px;width:38.0px;height:11.2px;background:#3c3c3c;border:1px solid #585858;border-radius:1.5px"></div>
<span class="val" style="left:929.5px;top:314.6px">0 pt</span>
<div class="a" style="left:927.0px;top:331.8px;width:38.0px;height:11.0px;background:#3c3c3c;border:1px solid #585858;border-radius:1.5px"></div>
<span class="val" style="left:929.5px;top:332.8px">0 pt</span>
<div class="a" style="left:1007.0px;top:331.8px;width:38.6px;height:11.0px;background:#3c3c3c;border:1px solid #585858;border-radius:1.5px"></div>
<span class="val" style="left:1009.5px;top:332.8px">0 pt</span>
<svg style="left:910.3px;top:299.3px" width="12" height="11" viewBox="0 0 12 11"><g fill="#cdcdcd"><path d="M0 4.7h2v-1.100l1.800 1.600-1.800 1.600v-1.100h-2z" fill="#f0f0f0"/><rect x="4.300" y="0.300" width="1" height="9.800"/><rect x="5.8" y="0.5" width="5" height="1.400"/><rect x="5.8" y="2.4" width="3.5" height="1.400"/><rect x="5.8" y="4.3" width="5" height="1.400"/><rect x="5.8" y="6.2" width="3.5" height="1.400"/><rect x="5.8" y="8.1" width="5" height="1.400"/></g></svg>
<svg style="left:991.5px;top:299.3px" width="12" height="11" viewBox="0 0 12 11"><g fill="#cdcdcd"><rect x="0.3" y="0.5" width="5" height="1.400"/><rect x="0.3" y="2.4" width="3.5" height="1.400"/><rect x="0.3" y="4.3" width="5" height="1.400"/><rect x="0.3" y="6.2" width="3.5" height="1.400"/><rect x="0.3" y="8.1" width="5" height="1.400"/><rect x="5.800" y="0.300" width="1" height="9.800"/><path d="M11.0 4.7h-2v-1.100l-1.800 1.600 1.800 1.600v-1.100h2z" fill="#f0f0f0"/></g></svg>
<svg style="left:910.3px;top:313.8px" width="12" height="11" viewBox="0 0 12 11"><g fill="#cdcdcd"><path d="M0 1.5h2v-1.100l1.800 1.600-1.800 1.600v-1.100h-2z" fill="#f0f0f0"/><rect x="6.5" y="2.0" width="4.5" height="1.400"/><rect x="4.5" y="3.9" width="6.5" height="1.400"/><rect x="4.5" y="5.8" width="5.0" height="1.400"/><rect x="4.5" y="7.7" width="6.5" height="1.400"/><rect x="4.5" y="9.6" width="6.5" height="1.400"/></g></svg>
<svg style="left:910.3px;top:332.3px" width="12" height="11" viewBox="0 0 12 11"><g fill="#cdcdcd"><path d="M0 1.3h2v-1.100l1.800 1.600-1.800 1.600v-1.100h-2z" fill="#f0f0f0"/><rect x="4.5" y="0.8" width="7" height="1.400"/><rect x="4.5" y="3.2" width="7" height="1.400"/><rect x="4.5" y="5.1" width="7" height="1.400"/><rect x="4.5" y="7.0" width="7" height="1.400"/><rect x="4.5" y="8.9" width="5.5" height="1.400"/></g></svg>
<svg style="left:990.5px;top:331.8px" width="12" height="11" viewBox="0 0 12 11"><g fill="#cdcdcd"><rect x="5" y="0.3" width="7" height="1.400"/><rect x="5" y="2.2" width="7" height="1.400"/><rect x="5" y="4.1" width="7" height="1.400"/><rect x="5" y="6.0" width="5.5" height="1.400"/><rect x="5" y="8.6" width="7" height="1.400"/><path d="M0.5 8.8h2v-1.100l1.800 1.600-1.800 1.600v-1.100h-2z" fill="#f0f0f0"/></g></svg>
<span class="lab" style="left:912.300px;top:351px">禁則処理<span class="co">：</span></span>
<div class="a" style="left:949.7px;top:350.2px;width:111.1px;height:11.8px;background:#3c3c3c;border:1px solid #585858;border-radius:1.5px"></div>
<span class="lab" style="left:954.4px;top:351.6px">禁則を使用しない</span>
<svg style="left:1052.8px;top:354.8px" width="5.4" height="3.24" viewBox="0 0 6 3.600"><path fill="none" stroke="#dedede" stroke-width="1.350" stroke-linecap="round" stroke-linejoin="round" d="M0.800 0.700L3 2.900l2.200-2.200"/></svg>
<span class="lab" style="left:912.300px;top:367.300px">文字組み<span class="co">：</span></span>
<div class="a" style="left:949.7px;top:366.5px;width:111.1px;height:11.9px;background:#3c3c3c;border:1px solid #585858;border-radius:1.5px"></div>
<span class="lab" style="left:954.4px;top:367.9px">なし</span>
<svg style="left:1052.8px;top:371.1px" width="5.4" height="3.24" viewBox="0 0 6 3.600"><path fill="none" stroke="#dedede" stroke-width="1.350" stroke-linecap="round" stroke-linejoin="round" d="M0.800 0.700L3 2.900l2.200-2.200"/></svg>
<div class="a" style="left:912.300px;top:388.300px;width:8px;height:8px;background:#404040;border:1px solid #7a7a7a;border-radius:1.500px"></div>
<span class="lab" style="left:924.200px;top:387.300px">ハイフネーション</span>
<div class="a" style="left:906px;top:401.500px;width:220.500px;height:4px;background:#383838"></div>
<div class="pbar" style="left:906px;top:405px;width:220.5px;height:19px"></div>
<div class="a" style="left:906.0px;top:405.0px;width:28.0px;height:19.0px;background:#4a4a4a"></div>
<span class="pt" style="left:912.0px;top:410.0px">属性</span>
<div class="a" style="left:934.8px;top:405.0px;width:26.2px;height:19.0px;background:#404040"></div>
<span class="pt dim" style="left:940.5px;top:410.0px">パス</span>
<svg style="left:1116.0px;top:411.1px" width="7" height="5.400" viewBox="0 0 7 5.400"><rect width="7" height="5.400" fill="#7c7c7c"/><path d="M0 1.800h7M0 3.600h7" stroke="#6a6a6a" stroke-width="0.500"/></svg>
<div class="a" style="left:913.700px;top:428.700px;width:14.500px;height:15px;background:#333;border-radius:1.500px"></div>
<svg style="left:917px;top:431px" width="8" height="10" viewBox="0 0 8 10"><path d="M0.600 0.600h4.200l2.600 2.600v6.200H0.600z" fill="none" stroke="#f0f0f0" stroke-width="1.100" stroke-linejoin="round"/><path d="M4.600 0.600v2.800h2.800" fill="none" stroke="#f0f0f0" stroke-width="0.900"/></svg>
<span class="lab" style="left:933px;top:431.700px;color:#e6e6e6">ドキュメント</span>
<div class="hsep" style="left:906px;top:447.500px;width:211px"></div>
<div class="a" style="left:1117px;top:448px;width:9.500px;height:311px;background:#454545"></div>
<div class="a" style="left:1118px;top:450px;width:5.500px;height:271px;background:#666;border-radius:3px"></div>
<div class="a" style="left:1117px;top:721px;width:9.500px;height:27px;background:#3f3f3f"></div>
<svg style="left:910.800px;top:457.7px" width="6.400" height="4" viewBox="0 0 6.400 4"><path fill="none" stroke="#dcdcdc" stroke-width="1.050" stroke-linecap="round" stroke-linejoin="round" d="M0.700 0.700L3.200 3.200 5.700 0.700"/></svg>
<span class="hd" style="left:920.800px;top:455.1px">カンパス</span>
<span class="lab" style="left:941px;top:472.300px;font-size:8.600px">W</span>
<div class="a" style="left:951.0px;top:471.2px;width:39.5px;height:11.0px;background:#3c3c3c;border:1px solid #585858;border-radius:1.5px"></div>
<span class="val" style="left:953.500px;top:471.600px;width:36px;overflow:hidden">121.05 mm</span>
<span class="lab" style="left:1000px;top:472.300px;font-size:8.600px">X</span>
<div class="a" style="left:1008.7px;top:471.2px;width:39.3px;height:11.0px;background:#444;border:1px solid #555;border-radius:1.5px"></div>
<span class="val dimt" style="left:1011.2px;top:472.2px">0 mm</span>
<span class="lab" style="left:942px;top:490.100px;font-size:8.600px">H</span>
<div class="a" style="left:951.0px;top:489.0px;width:39.5px;height:11.0px;background:#3c3c3c;border:1px solid #585858;border-radius:1.5px"></div>
<span class="val" style="left:953.5px;top:490.0px">173.3 mm</span>
<span class="lab" style="left:1000px;top:490.100px;font-size:8.600px">Y</span>
<div class="a" style="left:1008.7px;top:489.0px;width:39.3px;height:11.0px;background:#444;border:1px solid #555;border-radius:1.5px"></div>
<span class="val dimt" style="left:1011.2px;top:490.0px">0 mm</span>
<svg style="left:919px;top:480.300px" width="6.600" height="10.600" viewBox="0 0 6.600 10.600" fill="none" stroke="#dcdcdc" stroke-width="1.150"><rect x="0.800" y="0.700" width="5" height="4.600" rx="2.300"/><rect x="0.800" y="5.300" width="5" height="4.600" rx="2.300"/><path d="M3.300 3.600v3.400"/></svg>
<div class="a" style="left:952.500px;top:508.700px;width:16px;height:16px;background:#2e2e2e;border-radius:1.500px"></div>
<svg style="left:956.500px;top:511.200px" width="8" height="11" viewBox="0 0 8 11"><rect x="0.500" y="0.500" width="7" height="10" rx="0.800" fill="none" stroke="#f0f0f0" stroke-width="1"/><circle cx="4" cy="4" r="1.300" fill="#f0f0f0"/><path d="M1.800 9.800V7.500c0-1 1-1.500 2.200-1.500s2.200 0.500 2.200 1.500v2.300z" fill="#f0f0f0"/></svg>
<svg style="left:973px;top:512.500px" width="12" height="9" viewBox="0 0 12 9"><rect x="0.500" y="0.500" width="11" height="8" rx="0.800" fill="none" stroke="#e6e6e6" stroke-width="1"/><circle cx="6" cy="3.300" r="1.200" fill="#e6e6e6"/><path d="M3.500 7.800V6.500c0-0.900 1.100-1.400 2.500-1.400s2.500 0.500 2.500 1.400v1.300z" fill="#e6e6e6"/></svg>
<span class="lab" style="left:951.200px;top:532.500px">解像度<span class="co">：</span><span class="en">350 pixel/inch</span></span>
<span class="lab" style="left:928px;top:551.500px">モード</span>
<div class="a" style="left:953.0px;top:550.7px;width:95.0px;height:11.8px;background:#3c3c3c;border:1px solid #585858;border-radius:1.5px"></div>
<span class="lab" style="left:958.0px;top:552.1px"><span class="en">RGB</span> カラー</span>
<svg style="left:1039.8px;top:555.4px" width="5.4" height="3.24" viewBox="0 0 6 3.600"><path fill="none" stroke="#dedede" stroke-width="1.350" stroke-linecap="round" stroke-linejoin="round" d="M0.800 0.700L3 2.900l2.200-2.200"/></svg>
<div class="a" style="left:953.0px;top:570.0px;width:95.0px;height:11.8px;background:#3c3c3c;border:1px solid #585858;border-radius:1.5px"></div>
<span class="lab" style="left:958.0px;top:571.4px"><span class="en">8 bit/</span>チャンネル</span>
<svg style="left:1039.8px;top:574.6px" width="5.4" height="3.24" viewBox="0 0 6 3.600"><path fill="none" stroke="#dedede" stroke-width="1.350" stroke-linecap="round" stroke-linejoin="round" d="M0.800 0.700L3 2.900l2.200-2.200"/></svg>
<span class="lab" style="left:935px;top:592px">塗り</span>
<div class="a" style="left:952.400px;top:590.600px;width:12.500px;height:12.500px;background:#444;border:1px solid #5a5a5a"></div>
<div class="a" style="left:969.6px;top:591.0px;width:78.4px;height:12.0px;background:#444;border:1px solid #555;border-radius:1.5px"></div>
<span class="lab dimt" style="left:974.0px;top:592.5px">背景色</span>
<svg style="left:1039.8px;top:595.6px" width="5.4" height="3.24" viewBox="0 0 6 3.600"><path fill="none" stroke="#6a6a6a" stroke-width="1.350" stroke-linecap="round" stroke-linejoin="round" d="M0.800 0.700L3 2.900l2.200-2.200"/></svg>
<div class="hsep" style="left:906px;top:611px;width:211px"></div>
<svg style="left:910.800px;top:621.2px" width="6.400" height="4" viewBox="0 0 6.400 4"><path fill="none" stroke="#dcdcdc" stroke-width="1.050" stroke-linecap="round" stroke-linejoin="round" d="M0.700 0.700L3.200 3.200 5.700 0.700"/></svg>
<span class="hd" style="left:920.800px;top:618.6px">定規とグリッド</span>
<div class="a" style="left:913.700px;top:635.400px;width:16.500px;height:16.600px;background:#2e2e2e;border-radius:1.500px"></div>
<svg style="left:916.500px;top:638.500px" width="11" height="11" viewBox="0 0 11 11"><path d="M0.500 0.500h10v3.500H4v6.500H0.500z" fill="#e8e8e8"/><path d="M2.500 1v1.500M4.500 1v1.500M6.500 1v1.500M8.500 1v1.500M1 4.500h1.500M1 6.500h1.500M1 8.500h1.500" stroke="#555" stroke-width="0.600"/></svg>
<svg style="left:939.300px;top:638.200px" width="11" height="11" viewBox="0 0 11 11" fill="none" stroke="#dcdcdc" stroke-width="0.900"><rect x="0.500" y="0.500" width="10" height="10"/><path d="M3.800 0.500v10M7.200 0.500v10M0.500 3.800h10M0.500 7.200h10"/></svg>
<svg style="left:962.900px;top:638.200px" width="11" height="11" viewBox="0 0 11 11"><rect x="0.500" y="0.500" width="10" height="10" fill="none" stroke="#dcdcdc" stroke-width="0.900"/><g fill="#bdbdbd"><circle cx="3" cy="3" r="0.700"/><circle cx="5.500" cy="3" r="0.700"/><circle cx="8" cy="3" r="0.700"/><circle cx="3" cy="5.500" r="0.700"/><circle cx="5.500" cy="5.500" r="0.700"/><circle cx="8" cy="5.500" r="0.700"/><circle cx="3" cy="8" r="0.700"/><circle cx="5.500" cy="8" r="0.700"/><circle cx="8" cy="8" r="0.700"/></g></svg>
<div class="a" style="left:995.5px;top:637.8px;width:52.5px;height:11.8px;background:#3c3c3c;border:1px solid #585858;border-radius:1.5px"></div>
<span class="val" style="left:1001.0px;top:639.2px">mm</span>
<svg style="left:1039.8px;top:642.4px" width="5.4" height="3.24" viewBox="0 0 6 3.600"><path fill="none" stroke="#dedede" stroke-width="1.350" stroke-linecap="round" stroke-linejoin="round" d="M0.800 0.700L3 2.900l2.200-2.200"/></svg>
<div class="hsep" style="left:906px;top:660px;width:211px"></div>
<svg style="left:910.800px;top:670.2px" width="6.400" height="4" viewBox="0 0 6.400 4"><path fill="none" stroke="#dcdcdc" stroke-width="1.050" stroke-linecap="round" stroke-linejoin="round" d="M0.700 0.700L3.200 3.200 5.700 0.700"/></svg>
<span class="hd" style="left:920.800px;top:667.6px">ガイド</span>
<svg style="left:916.500px;top:687.500px" width="11" height="11" viewBox="0 0 11 11" fill="none" stroke="#7e7e7e" stroke-width="0.900"><path d="M3.500 0v11M6 0v11M0 3.500h11M0 6h11"/></svg>
<svg style="left:939.500px;top:687px" width="13" height="12" viewBox="0 0 13 12"><path d="M3.500 0v11M6 0v11M0 3.500h11M0 6h11" fill="none" stroke="#dcdcdc" stroke-width="0.900"/><rect x="7.500" y="8" width="5" height="4" fill="#ededed"/><path d="M8.500 8V7a1.500 1.500 0 0 1 3 0v1" fill="none" stroke="#ededed" stroke-width="0.800"/></svg>
<div class="a" style="left:960.200px;top:683.800px;width:16.500px;height:17.200px;background:#2e2e2e;border-radius:1.500px"></div>
<svg style="left:963px;top:686.500px" width="12" height="12" viewBox="0 0 12 12"><path d="M4.500 0v12M0 4.500h9" fill="none" stroke="#e8e8e8" stroke-width="0.900"/><path d="M2 2.500l1.500 1.500M2 6.500l1.500-1.500" stroke="#e8e8e8" stroke-width="0.600"/><path d="M9.500 5.500L7 9h1.800L8 12l3-4H9.200z" fill="#f0f0f0"/></svg>
<div class="a" style="left:995.5px;top:687.3px;width:52.5px;height:11.8px;background:#3c3c3c;border:1px solid #585858;border-radius:1.5px"></div>
<div class="a" style="left:1001px;top:692.700px;width:30px;height:1.200px;background:#e0e0e0"></div>
<svg style="left:1039.8px;top:691.9px" width="5.4" height="3.24" viewBox="0 0 6 3.600"><path fill="none" stroke="#dedede" stroke-width="1.350" stroke-linecap="round" stroke-linejoin="round" d="M0.800 0.700L3 2.900l2.200-2.200"/></svg>
<div class="hsep" style="left:906px;top:709.300px;width:211px"></div>
<svg style="left:910.800px;top:719.7px" width="6.400" height="4" viewBox="0 0 6.400 4"><path fill="none" stroke="#dcdcdc" stroke-width="1.050" stroke-linecap="round" stroke-linejoin="round" d="M0.700 0.700L3.200 3.200 5.700 0.700"/></svg>
<span class="hd" style="left:920.800px;top:717.1px">クイック操作</span>
<!-- right panel column -->
<div class="a" style="left:1126.500px;top:65px;width:223.500px;height:694px;background:#383838"></div>
<div class="a" style="left:1126.500px;top:65px;width:2.300px;height:694px;background:#323232"></div>
<div class="a" style="left:1129px;top:65px;width:221px;height:694px;background:#424242"></div>
<svg style="left:1339.500px;top:58px" width="6" height="4" viewBox="0 0 6 4" fill="none" stroke="#dadada" stroke-width="1"><path d="M0.700 0.300L2.500 2 0.700 3.700M3.500 0.300L5.300 2 3.500 3.700"/></svg>
<div class="pbar" style="left:1129px;top:65px;width:221px;height:19px"></div>
<div class="a" style="left:1129.0px;top:65.0px;width:36.0px;height:19.0px;background:#4a4a4a"></div>
<span class="pt" style="left:1135.5px;top:70.0px">カラー</span>
<svg style="left:1339.0px;top:71.1px" width="7" height="5.400" viewBox="0 0 7 5.400"><rect width="7" height="5.400" fill="#7c7c7c"/><path d="M0 1.800h7M0 3.600h7" stroke="#6a6a6a" stroke-width="0.500"/></svg>
<div class="a" style="left:1129px;top:84px;width:221px;height:104px;background:#4a4a4a"></div>
<div class="a" style="left:1143px;top:98.700px;width:13.500px;height:13.800px;background:#f8f5ea;border:1px solid #333"></div>
<div class="a" style="left:1134.700px;top:90.700px;width:15.200px;height:15px;background:#45c8ff;border:1px solid #3a3a3a;outline:1px solid #b8dff0;outline-offset:-2px"></div>
<svg style="left:1134.500px;top:123.700px" width="9" height="9" viewBox="0 0 9 9"><path d="M4.500 0.300L8.800 8.700H0.200z" fill="#e8e8e8"/><path d="M4.500 3v3M4.500 7v0.900" stroke="#333" stroke-width="1"/></svg>
<div class="a" style="left:1145.700px;top:123.700px;width:8.800px;height:8.800px;background:#45c8ff;border:1px solid #e0e0e0"></div>
<span class="lab" style="left:1160.700px;top:96.2px;font-size:8.600px;color:#e4e4e4">R</span>
<span class="lab" style="left:1160.700px;top:111.7px;font-size:8.600px;color:#e4e4e4">G</span>
<span class="lab" style="left:1160.700px;top:127.4px;font-size:8.600px;color:#e4e4e4">B</span>
<div class="a" style="left:1170px;top:94.300px;width:122px;height:5px;background:linear-gradient(90deg,#00d3ff,#ffd3ff)"></div>
<div class="a" style="left:1170px;top:110px;width:122px;height:4.600px;background:linear-gradient(90deg,#5000ff,#50ffff)"></div>
<div class="a" style="left:1170px;top:125.500px;width:122px;height:4.600px;background:linear-gradient(90deg,#50d300,#50d3ff)"></div>
<svg style="left:1203.0px;top:98.9px" width="10" height="9" viewBox="0 0 10 9"><path d="M5 1.300L8.600 7.600H1.400z" fill="#fafafa" stroke="#222" stroke-width="2.400" stroke-linejoin="round"/><path d="M5 1.300L8.600 7.600H1.400z" fill="#fafafa" stroke="#fafafa" stroke-width="1" stroke-linejoin="round"/></svg>
<svg style="left:1264.5px;top:114.4px" width="10" height="9" viewBox="0 0 10 9"><path d="M5 1.300L8.600 7.600H1.400z" fill="#fafafa" stroke="#222" stroke-width="2.400" stroke-linejoin="round"/><path d="M5 1.300L8.600 7.600H1.400z" fill="#fafafa" stroke="#fafafa" stroke-width="1" stroke-linejoin="round"/></svg>
<svg style="left:1285.0px;top:129.9px" width="10" height="9" viewBox="0 0 10 9"><path d="M5 1.300L8.600 7.600H1.400z" fill="#fafafa" stroke="#222" stroke-width="2.400" stroke-linejoin="round"/><path d="M5 1.300L8.600 7.600H1.400z" fill="#fafafa" stroke="#fafafa" stroke-width="1" stroke-linejoin="round"/></svg>
<div class="a" style="left:1295.0px;top:95.0px;width:28.0px;height:10.8px;background:#3c3c3c;border:1px solid #585858;border-radius:1.5px"></div>
<span class="val" style="left:1297.5px;top:95.9px">80</span>
<div class="a" style="left:1295.0px;top:110.7px;width:28.0px;height:10.6px;background:#3c3c3c;border:1px solid #585858;border-radius:1.5px"></div>
<span class="val" style="left:1297.5px;top:111.5px">211</span>
<div class="a" style="left:1295.0px;top:126.2px;width:28.0px;height:10.8px;background:#3c3c3c;border:1px solid #585858;border-radius:1.5px"></div>
<span class="val" style="left:1297.5px;top:127.1px">255</span>
<div class="a" style="left:1134.500px;top:146.700px;width:199.400px;height:37.800px;background:linear-gradient(180deg,#fff 0%,rgba(255,255,255,0.7) 10%,rgba(255,255,255,0) 46%,rgba(0,0,0,0) 46%,rgba(0,0,0,0.85) 88%,#000 100%),linear-gradient(90deg,#f00 0%,#ff0 16.600%,#0f0 33.300%,#0ff 50%,#00f 66.600%,#f0f 83.300%,#f00 100%)"></div>
<div class="a" style="left:1333.700px;top:146.700px;width:6.300px;height:19.600px;background:#fff"></div>
<div class="a" style="left:1333.700px;top:166.300px;width:6.300px;height:18.200px;background:#000"></div>
<div class="a" style="left:1129px;top:188px;width:221px;height:4px;background:#383838"></div>
<div class="pbar" style="left:1129px;top:192px;width:221px;height:19.3px"></div>
<div class="a" style="left:1129.0px;top:192.0px;width:51.0px;height:19.3px;background:#4a4a4a"></div>
<span class="pt" style="left:1135.5px;top:197.2px">チャンネル</span>
<svg style="left:1339.0px;top:199.1px" width="7" height="5.400" viewBox="0 0 7 5.400"><rect width="7" height="5.400" fill="#7c7c7c"/><path d="M0 1.800h7M0 3.600h7" stroke="#6a6a6a" stroke-width="0.500"/></svg>
<div class="a" style="left:1129px;top:216.200px;width:210px;height:102.300px;background:#4f4f4f"></div>
<div class="a" style="left:1129px;top:211.300px;width:221px;height:5px;background:#484848"></div>
<div class="row" style="left:1129px;top:216.2px;width:210px;height:24.300px"></div>
<svg style="left:1132.2px;top:224.8px" width="10" height="7" viewBox="0 0 10 7"><path d="M0.300 3.500C1.500 1.300 3.200 0.400 5 0.400s3.500 0.900 4.700 3.100C8.500 5.700 6.800 6.600 5 6.600S1.500 5.700 0.300 3.500z" fill="#f2f2f2"/><circle cx="5" cy="3.500" r="1.900" fill="#5d5d5d"/><circle cx="5" cy="3.500" r="0.900" fill="#f2f2f2"/></svg>
<div class="a" style="left:1147.0px;top:217.2px;width:15.3px;height:22.3px;background:#fff;border:0.500px solid #333"></div>
<svg style="left:1152.7px;top:221.2px" width="5" height="15.2" viewBox="0 0 5 14" preserveAspectRatio="none"><path d="M1.500 0.500l1.500 0.500-0.800 1.500M2.500 3c1 1 1 3 0.200 4.500M1.200 7l2 0.300M2 7.500c-0.500 2 0.800 3 1.800 4M2.200 11v2.300l1 0.200M3.800 11.500l0.700 1" stroke="#555" stroke-width="0.600" fill="none"/></svg>
<span class="lab" style="left:1166px;top:223.8px;color:#f0f0f0"><span class="en">RGB</span></span>
<span class="lab" style="left:1321.500px;top:223.8px;font-size:7px;color:#ececec;font-weight:bold"><span style="font-family:DejaVu Sans,sans-serif;font-size:6.300px;font-weight:bold">⌘</span>2</span>
<div class="row" style="left:1129px;top:242.2px;width:210px;height:24.300px"></div>
<svg style="left:1132.2px;top:250.8px" width="10" height="7" viewBox="0 0 10 7"><path d="M0.300 3.500C1.500 1.300 3.200 0.400 5 0.400s3.500 0.900 4.700 3.100C8.500 5.700 6.800 6.600 5 6.600S1.500 5.700 0.300 3.500z" fill="#f2f2f2"/><circle cx="5" cy="3.500" r="1.900" fill="#5d5d5d"/><circle cx="5" cy="3.500" r="0.900" fill="#f2f2f2"/></svg>
<div class="a" style="left:1147.0px;top:243.2px;width:15.3px;height:22.3px;background:#fff;border:0.500px solid #333"></div>
<svg style="left:1152.7px;top:247.2px" width="5" height="15.2" viewBox="0 0 5 14" preserveAspectRatio="none"><path d="M1.500 0.500l1.500 0.500-0.800 1.500M2.500 3c1 1 1 3 0.200 4.500M1.200 7l2 0.300M2 7.500c-0.500 2 0.800 3 1.800 4M2.200 11v2.300l1 0.200M3.800 11.500l0.700 1" stroke="#555" stroke-width="0.600" fill="none"/></svg>
<span class="lab" style="left:1166px;top:249.8px;color:#f0f0f0">レッド</span>
<span class="lab" style="left:1321.500px;top:249.8px;font-size:7px;color:#ececec;font-weight:bold"><span style="font-family:DejaVu Sans,sans-serif;font-size:6.300px;font-weight:bold">⌘</span>3</span>
<div class="row" style="left:1129px;top:268.2px;width:210px;height:24.300px"></div>
<svg style="left:1132.2px;top:276.8px" width="10" height="7" viewBox="0 0 10 7"><path d="M0.300 3.500C1.500 1.300 3.200 0.400 5 0.400s3.500 0.900 4.700 3.100C8.500 5.700 6.800 6.600 5 6.600S1.500 5.700 0.300 3.500z" fill="#f2f2f2"/><circle cx="5" cy="3.500" r="1.900" fill="#5d5d5d"/><circle cx="5" cy="3.500" r="0.900" fill="#f2f2f2"/></svg>
<div class="a" style="left:1147.0px;top:269.2px;width:15.3px;height:22.3px;background:#fff;border:0.500px solid #333"></div>
<svg style="left:1152.7px;top:273.2px" width="5" height="15.2" viewBox="0 0 5 14" preserveAspectRatio="none"><path d="M1.500 0.500l1.500 0.500-0.800 1.500M2.500 3c1 1 1 3 0.200 4.500M1.200 7l2 0.300M2 7.500c-0.500 2 0.800 3 1.800 4M2.200 11v2.300l1 0.200M3.800 11.500l0.700 1" stroke="#555" stroke-width="0.600" fill="none"/></svg>
<span class="lab" style="left:1166px;top:275.8px;color:#f0f0f0">グリーン</span>
<span class="lab" style="left:1321.500px;top:275.8px;font-size:7px;color:#ececec;font-weight:bold"><span style="font-family:DejaVu Sans,sans-serif;font-size:6.300px;font-weight:bold">⌘</span>4</span>
<div class="row" style="left:1129px;top:294.2px;width:210px;height:24.300px"></div>
<svg style="left:1132.2px;top:302.8px" width="10" height="7" viewBox="0 0 10 7"><path d="M0.300 3.500C1.500 1.300 3.200 0.400 5 0.400s3.500 0.900 4.700 3.100C8.500 5.700 6.800 6.600 5 6.600S1.500 5.700 0.300 3.500z" fill="#f2f2f2"/><circle cx="5" cy="3.500" r="1.900" fill="#5d5d5d"/><circle cx="5" cy="3.500" r="0.900" fill="#f2f2f2"/></svg>
<div class="a" style="left:1147.0px;top:295.2px;width:15.3px;height:22.3px;background:#fff;border:0.500px solid #333"></div>
<svg style="left:1152.7px;top:299.2px" width="5" height="15.2" viewBox="0 0 5 14" preserveAspectRatio="none"><path d="M1.500 0.500l1.500 0.500-0.800 1.500M2.500 3c1 1 1 3 0.200 4.500M1.200 7l2 0.300M2 7.500c-0.500 2 0.800 3 1.800 4M2.200 11v2.300l1 0.200M3.800 11.500l0.700 1" stroke="#555" stroke-width="0.600" fill="none"/></svg>
<span class="lab" style="left:1166px;top:301.8px;color:#f0f0f0">ブルー</span>
<span class="lab" style="left:1321.500px;top:301.8px;font-size:7px;color:#ececec;font-weight:bold"><span style="font-family:DejaVu Sans,sans-serif;font-size:6.300px;font-weight:bold">⌘</span>5</span>
<div class="a" style="left:1129px;top:375.500px;width:221px;height:18px;background:#4a4a4a;border-top:1px solid #3a3a3a"></div>
<svg style="left:1258.900px;top:380.500px" width="8" height="8" viewBox="0 0 8 8"><circle cx="4" cy="4" r="3.300" fill="none" stroke="#d8d8d8" stroke-width="1" stroke-dasharray="1.200 1"/></svg>
<svg style="left:1278.500px;top:381px" width="9" height="7" viewBox="0 0 9 7"><rect x="0" y="0" width="9" height="7" rx="0.800" fill="#bdbdbd"/><circle cx="4.500" cy="3.500" r="2" fill="#4a4a4a"/></svg>
<svg style="left:1301.400px;top:380.500px" width="8" height="8" viewBox="0 0 8 8"><rect x="0.600" y="0.600" width="6.800" height="6.800" rx="0.800" fill="none" stroke="#f0f0f0" stroke-width="1.100"/><path d="M4 2.300v3.400M2.300 4h3.400" stroke="#f0f0f0" stroke-width="1.100"/></svg>
<svg style="left:1322.1px;top:380.0px" width="7" height="9" viewBox="0 0 7 9"><path d="M0 1.500h7M2.300 1.500V0.500h2.400v1" fill="none" stroke="#7a7a7a" stroke-width="0.900"/><path d="M0.800 2.500h5.400L5.700 9H1.300z" fill="#7a7a7a"/></svg>
<div class="pbar" style="left:1129px;top:395px;width:221px;height:19.5px"></div>
<div class="a" style="left:1129px;top:393.500px;width:221px;height:1.500px;background:#383838"></div>
<div class="a" style="left:1129.0px;top:395.0px;width:43.5px;height:19.5px;background:#4a4a4a"></div>
<span class="pt" style="left:1135.5px;top:400.2px">レイヤー</span>
<svg style="left:1339.0px;top:401.6px" width="7" height="5.400" viewBox="0 0 7 5.400"><rect width="7" height="5.400" fill="#7c7c7c"/><path d="M0 1.800h7M0 3.600h7" stroke="#6a6a6a" stroke-width="0.500"/></svg>
<div class="a" style="left:1129px;top:414.500px;width:221px;height:65.500px;background:#4a4a4a"></div>
<div class="a" style="left:1129px;top:436.500px;width:221px;height:1px;background:#434343"></div>
<div class="a" style="left:1129px;top:458px;width:221px;height:1px;background:#434343"></div>
<div class="a" style="left:1132.5px;top:422.5px;width:85.5px;height:11.3px;background:#434343;border:1px solid #4e4e4e;border-radius:1.5px"></div>
<span class="lab dimt" style="left:1146.2px;top:423.6px">種類</span>
<svg style="left:1136.500px;top:424.500px" width="7" height="7" viewBox="0 0 7 7" fill="none" stroke="#9a9a9a" stroke-width="1"><circle cx="2.800" cy="2.800" r="2.200"/><path d="M4.500 4.500L6.700 6.700"/></svg>
<svg style="left:1211.7px;top:426.8px" width="4.6" height="2.76" viewBox="0 0 6 3.600"><path fill="none" stroke="#5a5a5a" stroke-width="1.350" stroke-linecap="round" stroke-linejoin="round" d="M0.800 0.700L3 2.900l2.200-2.200"/></svg>
<svg style="left:1230.500px;top:424px" width="10" height="8" viewBox="0 0 10 8"><rect x="0.500" y="0.500" width="9" height="7" rx="0.800" fill="none" stroke="#a8a8a8" stroke-width="1"/><path d="M1.500 6.500l2-2.500 1.500 1.500 1.500-2 2 3z" fill="#a8a8a8"/></svg>
<svg style="left:1248.500px;top:424px" width="8" height="8" viewBox="0 0 8 8"><circle cx="4" cy="4" r="3.500" fill="none" stroke="#a8a8a8" stroke-width="1"/><path d="M1.500 6.500A3.500 3.500 0 0 1 6.500 1.500z" fill="#a8a8a8"/></svg>
<svg style="left:1265px;top:423.500px" width="9" height="9" viewBox="0 0 9 9"><text x="4.500" y="8.200" text-anchor="middle" font-family="Liberation Serif,serif" font-weight="bold" font-size="10" fill="#a8a8a8">T</text></svg>
<svg style="left:1282px;top:424px" width="9" height="8" viewBox="0 0 9 8"><rect x="1.500" y="1.500" width="6" height="5" fill="none" stroke="#a8a8a8" stroke-width="0.900"/><g fill="#a8a8a8"><rect x="0" y="0" width="2.500" height="2.500"/><rect x="6.500" y="0" width="2.500" height="2.500"/><rect x="0" y="5.500" width="2.500" height="2.500"/><rect x="6.500" y="5.500" width="2.500" height="2.500"/></g></svg>
<svg style="left:1299.500px;top:423.500px" width="8" height="9" viewBox="0 0 8 9"><path d="M0.500 3.500h4V0.500h0.500l2.500 2.500v5.500h-7z" fill="#a8a8a8"/><path d="M0.500 3V0.500H4" fill="none" stroke="#a8a8a8" stroke-width="0.800"/></svg>
<div class="a" style="left:1319.500px;top:422px;width:6px;height:10.500px;background:#3a3a3a;border-radius:3px"></div>
<div class="a" style="left:1320px;top:422.300px;width:5px;height:5px;background:#8a8a8a;border-radius:50%"></div>
<div class="a" style="left:1132.5px;top:442.5px;width:117.5px;height:11.8px;background:#434343;border:1px solid #4e4e4e;border-radius:1.5px"></div>
<span class="lab dimt" style="left:1136.2px;top:443.9px">通常</span>
<svg style="left:1242.7px;top:447.1px" width="4.6" height="2.76" viewBox="0 0 6 3.600"><path fill="none" stroke="#606060" stroke-width="1.350" stroke-linecap="round" stroke-linejoin="round" d="M0.800 0.700L3 2.900l2.200-2.200"/></svg>
<span class="lab dimt" style="left:1252px;top:443.500px">不透明度<span class="co">：</span></span>
<div class="a" style="left:1287.5px;top:442.5px;width:28.8px;height:11.8px;background:#434343;border:1px solid #4e4e4e;border-radius:1.5px"></div>
<span class="val dimt" style="left:1290.0px;top:443.9px">100%</span>
<div class="a" style="left:1316.3px;top:442.5px;width:9.2px;height:11.8px;background:#434343;border:1px solid #4e4e4e;border-radius:1.5px"></div>
<svg style="left:1318.7px;top:447.1px" width="4.6" height="2.76" viewBox="0 0 6 3.600"><path fill="none" stroke="#606060" stroke-width="1.350" stroke-linecap="round" stroke-linejoin="round" d="M0.800 0.700L3 2.900l2.200-2.200"/></svg>
<span class="lab" style="left:1132.500px;top:464px;color:#8a8a8a">ロック<span class="co">：</span></span>
<svg style="left:1162.700px;top:464.700px" width="8" height="8" viewBox="0 0 8 8"><rect x="0.400" y="0.400" width="7.200" height="7.200" fill="none" stroke="#a8a8a8" stroke-width="0.800"/><g fill="#a8a8a8"><rect x="0.400" y="0.400" width="2.400" height="2.400"/><rect x="5.200" y="0.400" width="2.400" height="2.400"/><rect x="2.800" y="2.800" width="2.400" height="2.400"/><rect x="0.400" y="5.200" width="2.400" height="2.400"/><rect x="5.200" y="5.200" width="2.400" height="2.400"/></g></svg>
<svg style="left:1178px;top:464px" width="9" height="9" viewBox="0 0 9 9" fill="#a8a8a8"><path d="M8.200 0.300c0.500 0.400 0.400 0.900 0 1.400L4.700 5.600 3.500 4.600 7 0.600c0.400-0.500 0.800-0.600 1.200-0.300z"/><path d="M3 5.100l1.200 1.100c-0.200 1.200-1 1.900-2 2.100-0.700 0.100-1.400 0-1.900-0.200 0.900-0.400 1-0.900 1.200-1.600 0.100-0.700 0.700-1.300 1.500-1.400z"/></svg>
<svg style="left:1192.500px;top:464.200px" width="9" height="9" viewBox="0 0 13 13"><path fill="#a8a8a8" d="M6.500 0l2 2.500H7.200v3.300h3.300V4.500L13 6.500l-2.500 2V7.200H7.200v3.300h1.300L6.500 13l-2-2.500h1.300V7.200H2.500v1.300L0 6.500l2.500-2v1.300h3.300V2.500H4.500z"/></svg>
<svg style="left:1207.500px;top:464.200px" width="10" height="9" viewBox="0 0 10 9" fill="none" stroke="#a8a8a8" stroke-width="0.900"><path d="M2 0v7h8M0 2h6l2 2v3"/><path d="M6 2v2h2"/></svg>
<svg style="left:1224.700px;top:463.700px" width="7" height="9" viewBox="0 0 7 9"><rect x="0" y="4" width="7" height="5" rx="0.600" fill="#a8a8a8"/><path d="M1.500 4V2.500a2 2 0 0 1 4 0V4" fill="none" stroke="#a8a8a8" stroke-width="1"/></svg>
<span class="lab" style="left:1267.500px;top:464px;color:#8a8a8a">塗り<span class="co">：</span></span>
<div class="a" style="left:1287.5px;top:463.0px;width:28.8px;height:11.5px;background:#434343;border:1px solid #4e4e4e;border-radius:1.5px"></div>
<span class="val dimt" style="left:1290.0px;top:464.2px">100%</span>
<div class="a" style="left:1316.3px;top:463.0px;width:9.2px;height:11.5px;background:#434343;border:1px solid #4e4e4e;border-radius:1.5px"></div>
<svg style="left:1318.7px;top:467.4px" width="4.6" height="2.76" viewBox="0 0 6 3.600"><path fill="none" stroke="#606060" stroke-width="1.350" stroke-linecap="round" stroke-linejoin="round" d="M0.800 0.700L3 2.900l2.200-2.200"/></svg>
<div class="a" style="left:1129px;top:480px;width:22px;height:28px;background:#494949"></div>
<div class="row" style="left:1151px;top:480px;width:188.500px;height:28px"></div>
<svg style="left:1134.5px;top:491.0px" width="10" height="7" viewBox="0 0 10 7"><path d="M0.300 3.500C1.500 1.300 3.200 0.400 5 0.400s3.500 0.900 4.700 3.100C8.500 5.700 6.800 6.600 5 6.600S1.500 5.700 0.300 3.500z" fill="#f2f2f2"/><circle cx="5" cy="3.500" r="1.900" fill="#5d5d5d"/><circle cx="5" cy="3.500" r="0.900" fill="#f2f2f2"/></svg>
<div class="a" style="left:1153.0px;top:483.0px;width:15.8px;height:22.5px;background:#fff;border:0.500px solid #333"></div>
<svg style="left:1158.9px;top:487.1px" width="5" height="15.3" viewBox="0 0 5 14" preserveAspectRatio="none"><path d="M1.500 0.500l1.500 0.500-0.800 1.500M2.500 3c1 1 1 3 0.200 4.500M1.200 7l2 0.300M2 7.500c-0.500 2 0.800 3 1.800 4M2.200 11v2.300l1 0.200M3.800 11.500l0.700 1" stroke="#555" stroke-width="0.600" fill="none"/></svg>
<span class="lab" style="left:1174.500px;top:490px;color:#f0f0f0">背景</span>
<svg style="left:1320.500px;top:489.800px" width="7" height="9" viewBox="0 0 7 9"><rect x="0.500" y="4" width="6" height="4.500" rx="0.600" fill="none" stroke="#e8e8e8" stroke-width="0.900"/><path d="M1.700 4V2.500a1.800 1.800 0 0 1 3.600 0V4" fill="none" stroke="#e8e8e8" stroke-width="0.900"/><rect x="3" y="5.500" width="1" height="1.800" fill="#e8e8e8"/></svg>
<div class="a" style="left:1129px;top:603.500px;width:221px;height:18px;background:#4a4a4a;border-top:1px solid #3a3a3a"></div>
<svg style="left:1207.500px;top:609.500px" width="10" height="6" viewBox="0 0 10 6" fill="none" stroke="#858585" stroke-width="1"><rect x="0.500" y="0.800" width="5" height="4.400" rx="2.200"/><rect x="4.500" y="0.800" width="5" height="4.400" rx="2.200"/></svg>
<svg style="left:1226.500px;top:607px" width="10" height="11" viewBox="0 0 10 11"><text x="0" y="8.500" font-family="Liberation Serif,serif" font-style="italic" font-size="10" fill="#858585">fx</text></svg>
<svg style="left:1246px;top:609px" width="9" height="7" viewBox="0 0 9 7"><rect x="0" y="0" width="9" height="7" rx="0.800" fill="#f0f0f0"/><circle cx="4.500" cy="3.500" r="1.900" fill="#4a4a4a"/></svg>
<svg style="left:1265.300px;top:608.500px" width="8" height="8" viewBox="0 0 8 8"><circle cx="4" cy="4" r="3.400" fill="none" stroke="#f0f0f0" stroke-width="1"/><path d="M1.600 6.400A3.400 3.400 0 0 1 6.400 1.600z" fill="#f0f0f0"/></svg>
<svg style="left:1271.500px;top:616px" width="3" height="2" viewBox="0 0 3 2"><path d="M0 0h3L1.500 2z" fill="#ddd"/></svg>
<svg style="left:1283.700px;top:608.800px" width="9" height="8" viewBox="0 0 9 8"><path d="M0 1.200C0 0.800 0.300 0.500 0.700 0.500h2.500l0.900 1h4.200c0.400 0 0.700 0.300 0.700 0.700v5.100c0 0.400-0.300 0.700-0.700 0.700H0.700C0.300 8 0 7.700 0 7.300z" fill="#e4e4e4"/><path d="M0 2.500h9" stroke="#4a4a4a" stroke-width="0.500"/></svg>
<svg style="left:1303.500px;top:608.500px" width="8" height="8" viewBox="0 0 8 8"><rect x="0.600" y="0.600" width="6.800" height="6.800" rx="0.800" fill="none" stroke="#f0f0f0" stroke-width="1.100"/><path d="M4 2.300v3.400M2.300 4h3.400" stroke="#f0f0f0" stroke-width="1.100"/></svg>
<svg style="left:1322.9px;top:608.0px" width="7" height="9" viewBox="0 0 7 9"><path d="M0 1.500h7M2.300 1.500V0.500h2.400v1" fill="none" stroke="#7a7a7a" stroke-width="0.900"/><path d="M0.800 2.500h5.400L5.700 9H1.300z" fill="#7a7a7a"/></svg>
<div class="a" style="left:1129px;top:621.500px;width:221px;height:2px;background:#383838"></div>
<div class="pbar" style="left:1129px;top:623.5px;width:221px;height:19.7px"></div>
<div class="a" style="left:1129.0px;top:623.5px;width:50.4px;height:19.7px;background:#4a4a4a"></div>
<span class="pt" style="left:1135.3px;top:628.9px">ヒストリー</span>
<svg style="left:1339.5px;top:630.3px" width="7" height="5.400" viewBox="0 0 7 5.400"><rect width="7" height="5.400" fill="#7c7c7c"/><path d="M0 1.800h7M0 3.600h7" stroke="#6a6a6a" stroke-width="0.500"/></svg>
<div class="a" style="left:1129px;top:643.200px;width:221px;height:105px;background:#454545"></div>
<div class="a" style="left:1339.500px;top:643.200px;width:10.500px;height:105px;background:#414141"></div>
<svg style="left:1132.500px;top:654.500px" width="10" height="10" viewBox="0 0 16 16" fill="#ededed"><path d="M13.800 1.600c0.500 0.500 0.500 1 0.100 1.600L9.400 9.300 7.700 7.800l4.700-6c0.400-0.500 0.900-0.600 1.400-0.200z"/><path d="M7 8.600l1.700 1.500c-0.300 1.700-1.300 2.700-2.700 3-1 0.200-1.900 0.100-2.600-0.200 1.200-0.600 1.400-1.200 1.600-2.200 0.200-1 0.900-1.900 2-2.100z"/><path d="M1.200 6.200a4 4 0 0 1 6.200-2.600l0.800-1 0.500 3.200-3.200-0.200 0.900-1a2.600 2.600 0 0 0-3.900 1.900z"/></svg>
<div class="a" style="left:1147.0px;top:652.0px;width:15.0px;height:15.0px;background:#fff;border:0.500px solid #333"></div>
<svg style="left:1152.5px;top:654.7px" width="5" height="10.2" viewBox="0 0 5 14" preserveAspectRatio="none"><path d="M1.500 0.500l1.500 0.500-0.800 1.500M2.500 3c1 1 1 3 0.200 4.500M1.200 7l2 0.300M2 7.500c-0.500 2 0.800 3 1.800 4M2.200 11v2.300l1 0.200M3.800 11.500l0.700 1" stroke="#555" stroke-width="0.600" fill="none"/></svg>
<span class="val" style="left:1166px;top:655.200px;font-size:8.150px;letter-spacing:-0.02px;color:#f0f0f0">youtube_ohotoshop_channel.jpg</span>
<div class="a" style="left:1129px;top:672.500px;width:210px;height:1px;background:#3c3c3c"></div>
<div class="row" style="left:1129px;top:675.500px;width:210px;height:15.500px"></div>
<div class="a" style="left:1133.500px;top:679.500px;width:7px;height:7px;border:1px solid #6a6a6a;border-radius:1px"></div>
<svg style="left:1151.500px;top:678px" width="10" height="10" viewBox="0 0 10 10"><path d="M0.500 2h3l1-1h3v1.500" fill="none" stroke="#e0e0e0" stroke-width="0.800"/><rect x="0.500" y="2.500" width="9" height="7" rx="0.600" fill="#e0e0e0"/><path d="M2 4.500h6M2 6h6M2 7.500h6M3.500 3.500v5M6.500 3.500v5" stroke="#6a6a6a" stroke-width="0.500"/></svg>
<span class="lab" style="left:1169px;top:678.300px;color:#f0f0f0">開く</span>
<div class="a" style="left:1129px;top:748px;width:221px;height:11px;background:#4a4a4a;border-top:1px solid #3a3a3a"></div>
<svg style="left:1277.500px;top:753px" width="10" height="8" viewBox="0 0 10 8"><rect x="0.500" y="2.500" width="6" height="5.500" fill="#e4e4e4"/><path d="M3 2V0.500h6.500V6H7" fill="none" stroke="#e4e4e4" stroke-width="0.900"/><path d="M1.500 4l4 3" stroke="#4a4a4a" stroke-width="0.800"/></svg>
<svg style="left:1300px;top:753px" width="10" height="8" viewBox="0 0 10 8"><path d="M0.500 2.200h2l0.800-1.400h3.400l0.800 1.400h2V8h-9z" fill="#e8e8e8"/><circle cx="5" cy="5" r="1.800" fill="#4a4a4a"/></svg>
<svg style="left:1322.2px;top:752.5px" width="7" height="9" viewBox="0 0 7 9"><path d="M0 1.500h7M2.300 1.500V0.500h2.400v1" fill="none" stroke="#7a7a7a" stroke-width="0.900"/><path d="M0.800 2.500h5.400L5.700 9H1.300z" fill="#7a7a7a"/></svg>
</div>
</body>
</html>
